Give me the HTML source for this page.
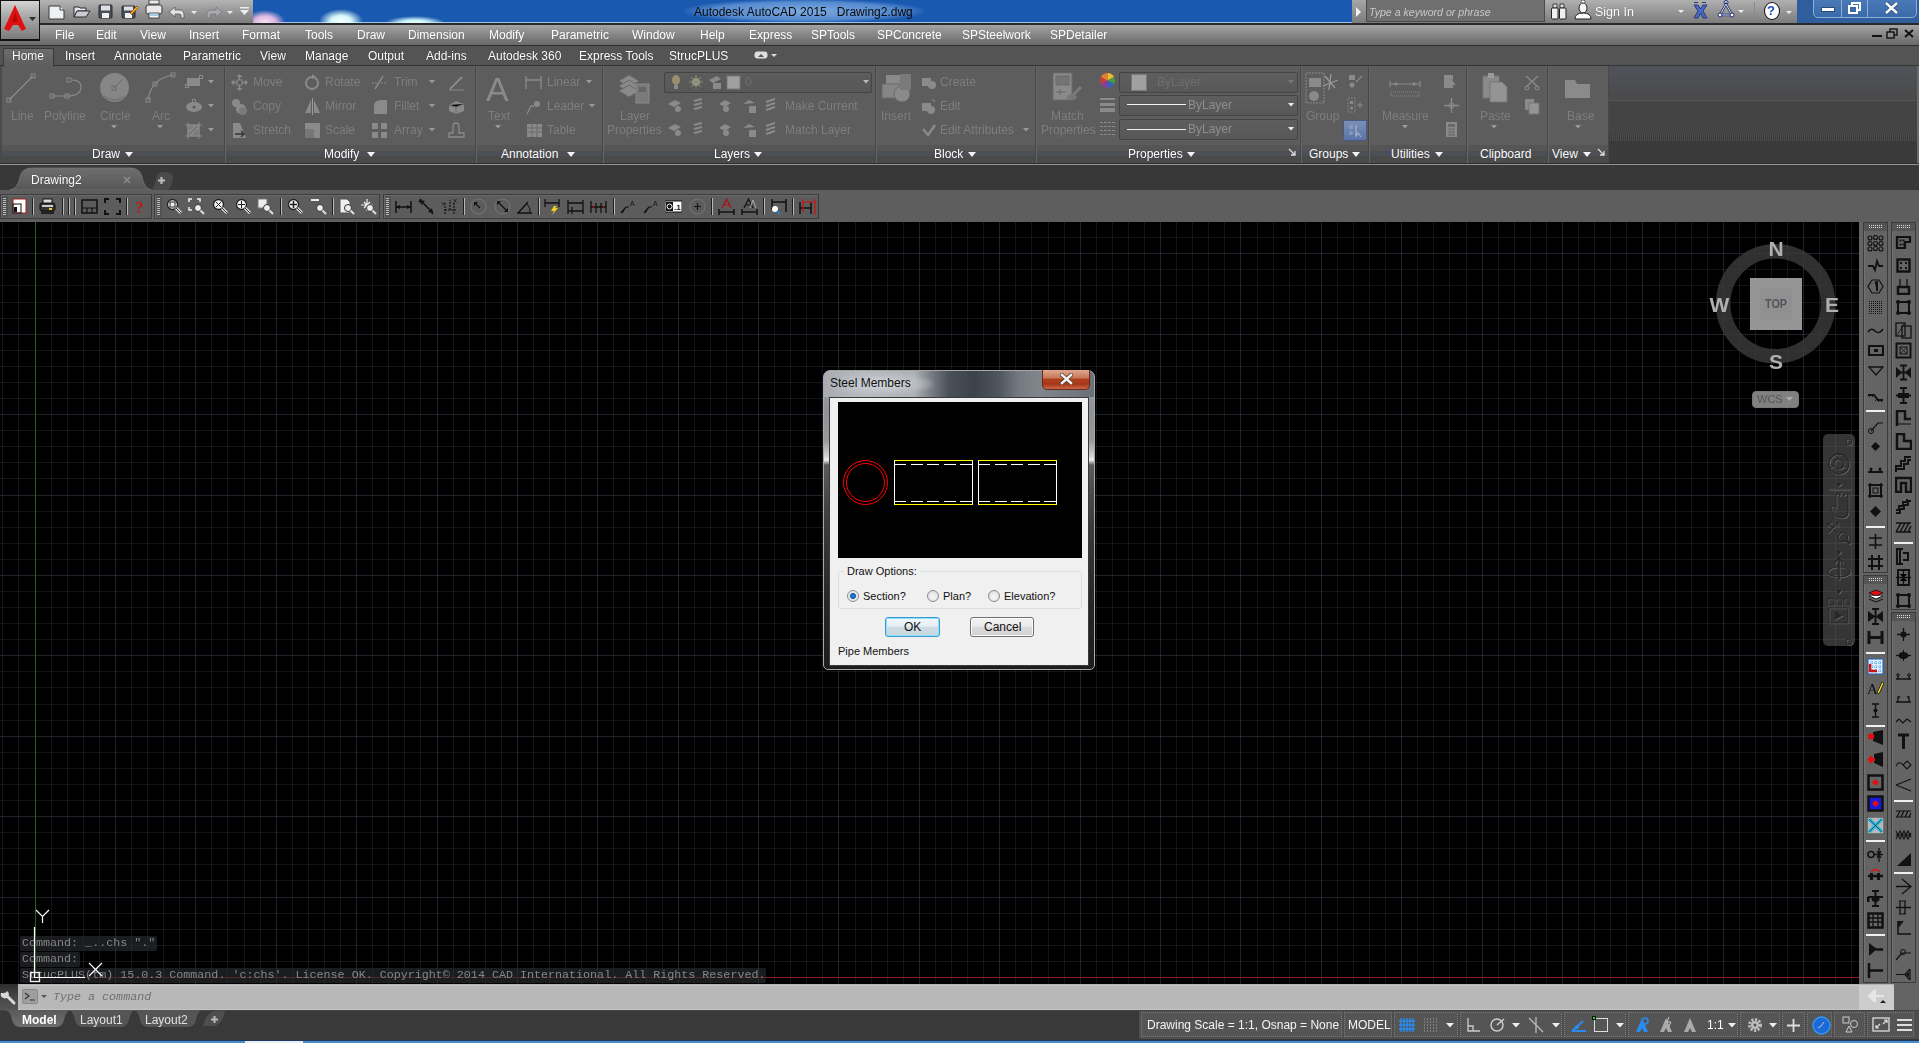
<!DOCTYPE html>
<html><head><meta charset="utf-8">
<style>
*{box-sizing:border-box}
html,body{margin:0;padding:0}
body{width:1919px;height:1043px;overflow:hidden;position:relative;background:#000;font-family:"Liberation Sans",sans-serif;font-size:12px;color:#fff}
.a{position:absolute}
.t{position:absolute;white-space:nowrap;line-height:1}
/* title bar */
#qat{left:39px;top:0;width:214px;height:24px;background:linear-gradient(#b4b4b4,#8e8e8e 60%,#7c7c7c)}
#blue{left:253px;top:0;width:1099px;height:23px;background:linear-gradient(#1a59b0 0,#1a59b0 22px,#9cc4ee 22px)}
#srch{left:1352px;top:0;width:193px;height:24px;background:linear-gradient(#a6a6a6,#7a7a7a)}
#srchbox{left:1366px;top:0;width:179px;height:22px;background:#6f6f6f;border:1px solid #4a4a4a;border-top:none}
#sign{left:1545px;top:0;width:252px;height:24px;background:linear-gradient(#b0b0b0,#8a8a8a 70%,#7a7a7a)}
#winbtn{left:1797px;top:0;width:122px;height:23px;background:#2f5e9e}
#tline{left:0;top:23px;width:1919px;height:2px;background:#2a2a2a}
#menubar{left:0;top:25px;width:1919px;height:21px;background:linear-gradient(#a4a4a4,#8a8a8a 40%,#666 100%)}
#mline{left:0;top:45px;width:1919px;height:1px;background:#2e2e2e}
#ribtabs{left:0;top:46px;width:1919px;height:20px;background:#545454;border-bottom:1px solid #333}
#ribbon{left:0;top:66px;width:1919px;height:98px;background:#444}
#rline{left:0;top:164px;width:1919px;height:1px;background:#959595}
#ftabs{left:0;top:165px;width:1919px;height:25px;background:#383838}
#tbrow{left:0;top:190px;width:1919px;height:32px;background:#5e5e5e}
#canvas{left:0;top:222px;width:1859px;height:762px;background:#000;overflow:hidden}
#rtb{left:1859px;top:222px;width:60px;height:762px;background:#646464}
#cmd{left:0;top:984px;width:1919px;height:26px;background:#b5b5b5}
#status{left:0;top:1010px;width:1919px;height:30px;background:#393939;border-top:1px solid #454545}
#task{left:0;top:1040px;width:1919px;height:3px;background:#2e6bb0}
</style></head><body>
<div class="a" id="canvas"><svg width="1859" height="762" style="position:absolute;left:0;top:0" shape-rendering="crispEdges"><rect x="0" y="15" width="1859" height="1" fill="#121419"/><rect x="0" y="31" width="1859" height="1" fill="#1f222a"/><rect x="0" y="47" width="1859" height="1" fill="#121419"/><rect x="0" y="63" width="1859" height="1" fill="#121419"/><rect x="0" y="80" width="1859" height="1" fill="#121419"/><rect x="0" y="96" width="1859" height="1" fill="#121419"/><rect x="0" y="112" width="1859" height="1" fill="#1f222a"/><rect x="0" y="128" width="1859" height="1" fill="#121419"/><rect x="0" y="144" width="1859" height="1" fill="#121419"/><rect x="0" y="160" width="1859" height="1" fill="#121419"/><rect x="0" y="176" width="1859" height="1" fill="#121419"/><rect x="0" y="192" width="1859" height="1" fill="#1f222a"/><rect x="0" y="208" width="1859" height="1" fill="#121419"/><rect x="0" y="224" width="1859" height="1" fill="#121419"/><rect x="0" y="240" width="1859" height="1" fill="#121419"/><rect x="0" y="256" width="1859" height="1" fill="#121419"/><rect x="0" y="273" width="1859" height="1" fill="#1f222a"/><rect x="0" y="289" width="1859" height="1" fill="#121419"/><rect x="0" y="305" width="1859" height="1" fill="#121419"/><rect x="0" y="321" width="1859" height="1" fill="#121419"/><rect x="0" y="337" width="1859" height="1" fill="#121419"/><rect x="0" y="353" width="1859" height="1" fill="#1f222a"/><rect x="0" y="369" width="1859" height="1" fill="#121419"/><rect x="0" y="385" width="1859" height="1" fill="#121419"/><rect x="0" y="401" width="1859" height="1" fill="#121419"/><rect x="0" y="417" width="1859" height="1" fill="#121419"/><rect x="0" y="433" width="1859" height="1" fill="#1f222a"/><rect x="0" y="449" width="1859" height="1" fill="#121419"/><rect x="0" y="465" width="1859" height="1" fill="#121419"/><rect x="0" y="482" width="1859" height="1" fill="#121419"/><rect x="0" y="498" width="1859" height="1" fill="#121419"/><rect x="0" y="514" width="1859" height="1" fill="#1f222a"/><rect x="0" y="530" width="1859" height="1" fill="#121419"/><rect x="0" y="546" width="1859" height="1" fill="#121419"/><rect x="0" y="562" width="1859" height="1" fill="#121419"/><rect x="0" y="578" width="1859" height="1" fill="#121419"/><rect x="0" y="594" width="1859" height="1" fill="#1f222a"/><rect x="0" y="610" width="1859" height="1" fill="#121419"/><rect x="0" y="626" width="1859" height="1" fill="#121419"/><rect x="0" y="642" width="1859" height="1" fill="#121419"/><rect x="0" y="658" width="1859" height="1" fill="#121419"/><rect x="0" y="675" width="1859" height="1" fill="#1f222a"/><rect x="0" y="691" width="1859" height="1" fill="#121419"/><rect x="0" y="707" width="1859" height="1" fill="#121419"/><rect x="0" y="723" width="1859" height="1" fill="#121419"/><rect x="0" y="739" width="1859" height="1" fill="#121419"/><g style="mix-blend-mode:screen"><rect x="2" y="0" width="1" height="762" fill="#121419"/><rect x="18" y="0" width="1" height="762" fill="#121419"/><rect x="51" y="0" width="1" height="762" fill="#121419"/><rect x="67" y="0" width="1" height="762" fill="#121419"/><rect x="83" y="0" width="1" height="762" fill="#121419"/><rect x="99" y="0" width="1" height="762" fill="#121419"/><rect x="115" y="0" width="1" height="762" fill="#1f222a"/><rect x="131" y="0" width="1" height="762" fill="#121419"/><rect x="147" y="0" width="1" height="762" fill="#121419"/><rect x="163" y="0" width="1" height="762" fill="#121419"/><rect x="179" y="0" width="1" height="762" fill="#121419"/><rect x="195" y="0" width="1" height="762" fill="#1f222a"/><rect x="211" y="0" width="1" height="762" fill="#121419"/><rect x="227" y="0" width="1" height="762" fill="#121419"/><rect x="244" y="0" width="1" height="762" fill="#121419"/><rect x="260" y="0" width="1" height="762" fill="#121419"/><rect x="276" y="0" width="1" height="762" fill="#1f222a"/><rect x="292" y="0" width="1" height="762" fill="#121419"/><rect x="308" y="0" width="1" height="762" fill="#121419"/><rect x="324" y="0" width="1" height="762" fill="#121419"/><rect x="340" y="0" width="1" height="762" fill="#121419"/><rect x="356" y="0" width="1" height="762" fill="#1f222a"/><rect x="372" y="0" width="1" height="762" fill="#121419"/><rect x="388" y="0" width="1" height="762" fill="#121419"/><rect x="404" y="0" width="1" height="762" fill="#121419"/><rect x="420" y="0" width="1" height="762" fill="#121419"/><rect x="437" y="0" width="1" height="762" fill="#1f222a"/><rect x="453" y="0" width="1" height="762" fill="#121419"/><rect x="469" y="0" width="1" height="762" fill="#121419"/><rect x="485" y="0" width="1" height="762" fill="#121419"/><rect x="501" y="0" width="1" height="762" fill="#121419"/><rect x="517" y="0" width="1" height="762" fill="#1f222a"/><rect x="533" y="0" width="1" height="762" fill="#121419"/><rect x="549" y="0" width="1" height="762" fill="#121419"/><rect x="565" y="0" width="1" height="762" fill="#121419"/><rect x="581" y="0" width="1" height="762" fill="#121419"/><rect x="597" y="0" width="1" height="762" fill="#1f222a"/><rect x="613" y="0" width="1" height="762" fill="#121419"/><rect x="629" y="0" width="1" height="762" fill="#121419"/><rect x="646" y="0" width="1" height="762" fill="#121419"/><rect x="662" y="0" width="1" height="762" fill="#121419"/><rect x="678" y="0" width="1" height="762" fill="#1f222a"/><rect x="694" y="0" width="1" height="762" fill="#121419"/><rect x="710" y="0" width="1" height="762" fill="#121419"/><rect x="726" y="0" width="1" height="762" fill="#121419"/><rect x="742" y="0" width="1" height="762" fill="#121419"/><rect x="758" y="0" width="1" height="762" fill="#1f222a"/><rect x="774" y="0" width="1" height="762" fill="#121419"/><rect x="790" y="0" width="1" height="762" fill="#121419"/><rect x="806" y="0" width="1" height="762" fill="#121419"/><rect x="822" y="0" width="1" height="762" fill="#121419"/><rect x="838" y="0" width="1" height="762" fill="#1f222a"/><rect x="855" y="0" width="1" height="762" fill="#121419"/><rect x="871" y="0" width="1" height="762" fill="#121419"/><rect x="887" y="0" width="1" height="762" fill="#121419"/><rect x="903" y="0" width="1" height="762" fill="#121419"/><rect x="919" y="0" width="1" height="762" fill="#1f222a"/><rect x="935" y="0" width="1" height="762" fill="#121419"/><rect x="951" y="0" width="1" height="762" fill="#121419"/><rect x="967" y="0" width="1" height="762" fill="#121419"/><rect x="983" y="0" width="1" height="762" fill="#121419"/><rect x="999" y="0" width="1" height="762" fill="#1f222a"/><rect x="1015" y="0" width="1" height="762" fill="#121419"/><rect x="1031" y="0" width="1" height="762" fill="#121419"/><rect x="1048" y="0" width="1" height="762" fill="#121419"/><rect x="1064" y="0" width="1" height="762" fill="#121419"/><rect x="1080" y="0" width="1" height="762" fill="#1f222a"/><rect x="1096" y="0" width="1" height="762" fill="#121419"/><rect x="1112" y="0" width="1" height="762" fill="#121419"/><rect x="1128" y="0" width="1" height="762" fill="#121419"/><rect x="1144" y="0" width="1" height="762" fill="#121419"/><rect x="1160" y="0" width="1" height="762" fill="#1f222a"/><rect x="1176" y="0" width="1" height="762" fill="#121419"/><rect x="1192" y="0" width="1" height="762" fill="#121419"/><rect x="1208" y="0" width="1" height="762" fill="#121419"/><rect x="1224" y="0" width="1" height="762" fill="#121419"/><rect x="1240" y="0" width="1" height="762" fill="#1f222a"/><rect x="1257" y="0" width="1" height="762" fill="#121419"/><rect x="1273" y="0" width="1" height="762" fill="#121419"/><rect x="1289" y="0" width="1" height="762" fill="#121419"/><rect x="1305" y="0" width="1" height="762" fill="#121419"/><rect x="1321" y="0" width="1" height="762" fill="#1f222a"/><rect x="1337" y="0" width="1" height="762" fill="#121419"/><rect x="1353" y="0" width="1" height="762" fill="#121419"/><rect x="1369" y="0" width="1" height="762" fill="#121419"/><rect x="1385" y="0" width="1" height="762" fill="#121419"/><rect x="1401" y="0" width="1" height="762" fill="#1f222a"/><rect x="1417" y="0" width="1" height="762" fill="#121419"/><rect x="1433" y="0" width="1" height="762" fill="#121419"/><rect x="1449" y="0" width="1" height="762" fill="#121419"/><rect x="1466" y="0" width="1" height="762" fill="#121419"/><rect x="1482" y="0" width="1" height="762" fill="#1f222a"/><rect x="1498" y="0" width="1" height="762" fill="#121419"/><rect x="1514" y="0" width="1" height="762" fill="#121419"/><rect x="1530" y="0" width="1" height="762" fill="#121419"/><rect x="1546" y="0" width="1" height="762" fill="#121419"/><rect x="1562" y="0" width="1" height="762" fill="#1f222a"/><rect x="1578" y="0" width="1" height="762" fill="#121419"/><rect x="1594" y="0" width="1" height="762" fill="#121419"/><rect x="1610" y="0" width="1" height="762" fill="#121419"/><rect x="1626" y="0" width="1" height="762" fill="#121419"/><rect x="1642" y="0" width="1" height="762" fill="#1f222a"/><rect x="1659" y="0" width="1" height="762" fill="#121419"/><rect x="1675" y="0" width="1" height="762" fill="#121419"/><rect x="1691" y="0" width="1" height="762" fill="#121419"/><rect x="1707" y="0" width="1" height="762" fill="#121419"/><rect x="1723" y="0" width="1" height="762" fill="#1f222a"/><rect x="1739" y="0" width="1" height="762" fill="#121419"/><rect x="1755" y="0" width="1" height="762" fill="#121419"/><rect x="1771" y="0" width="1" height="762" fill="#121419"/><rect x="1787" y="0" width="1" height="762" fill="#121419"/><rect x="1803" y="0" width="1" height="762" fill="#1f222a"/><rect x="1819" y="0" width="1" height="762" fill="#121419"/><rect x="1835" y="0" width="1" height="762" fill="#121419"/><rect x="1851" y="0" width="1" height="762" fill="#121419"/></g><rect x="35" y="0" width="1" height="755" fill="#1c661c"/><rect x="35" y="755" width="1824" height="1" fill="#8a1e1e"/></svg></div>
<div class="a" id="qat"></div>
<div class="a" id="blue"></div>
<div class="a" id="srch"></div>
<div class="a" id="srchbox"></div>
<div class="a" id="sign"></div>
<div class="a" id="winbtn"></div>
<div class="a" id="tline"></div>
<div class="a" id="menubar"></div>
<div class="a" id="mline"></div>
<div class="a" id="ribtabs"></div>
<div class="a" id="ribbon"></div>
<div class="a" id="rline"></div>
<div class="a" id="ftabs"></div>
<div class="a" id="tbrow"></div>
<div class="a" id="rtb"></div>
<div class="a" id="cmd"></div>
<div class="a" id="status"></div>
<div class="a" id="task"></div>

<!-- app button -->
<div class="a" style="left:0;top:0;width:40px;height:41px;background:#111;"></div>
<div class="a" style="left:1px;top:1px;width:38px;height:38px;background:linear-gradient(#d4d4d4,#a8a8a8 40%,#8c8c8c 80%,#7a7a7a)"></div>
<svg class="a" style="left:3px;top:5px" width="24" height="26"><path d="M12 0 L23 24 L19 26 L15 20 L10 20 L6 26 L1 24 Z" fill="#e01010"/><path d="M12 7 L15 17 L9 17 Z" fill="#b00c0c"/></svg>
<svg class="a" style="left:29px;top:17px" width="8" height="5"><path d="M0 0H7L3.5 4Z" fill="#2a2e36"/></svg>
<!-- QAT icons -->
<svg class="a" style="left:48px;top:5px" width="18" height="15"><path d="M1 1H12L16 5V14H1Z" fill="#eef0f2" stroke="#3a3a3a"/><path d="M12 1V5H16" fill="#fff" stroke="#3a3a3a"/></svg>
<svg class="a" style="left:73px;top:5px" width="18" height="13"><path d="M1 2H6L7 3H13V6H4L1 12Z" fill="#e4e6ea" stroke="#2a2a2a"/><path d="M4 6H17L13 12H1Z" fill="#c8ccd2" stroke="#2a2a2a"/></svg>
<svg class="a" style="left:98px;top:4px" width="16" height="15"><rect x="1" y="1" width="13" height="13" rx="1" fill="#4a5058" stroke="#2a2a2a"/><rect x="3" y="1.5" width="9" height="5" fill="#dde0e4"/><rect x="4" y="9" width="7" height="5" fill="#f0f0f0"/></svg>
<svg class="a" style="left:121px;top:4px" width="18" height="15"><rect x="1" y="2" width="13" height="12" rx="1" fill="#4a5058" stroke="#2a2a2a"/><rect x="3" y="2.5" width="9" height="4" fill="#dde0e4"/><rect x="4" y="9" width="7" height="5" fill="#f0f0f0"/><path d="M9 9L16 2L17.5 3.5L10.5 10.5Z" fill="#f0b020" stroke="#a04010" stroke-width=".8"/></svg>
<svg class="a" style="left:145px;top:0px" width="18" height="19"><rect x="4" y="0" width="10" height="4" fill="#e8e8e8" stroke="#333" stroke-width=".8"/><rect x="1" y="5" width="16" height="9" rx="2" fill="#eaeaea" stroke="#333"/><rect x="4" y="13" width="10" height="5" fill="#f4f4f4" stroke="#333" stroke-width=".8"/><rect x="5" y="14" width="8" height="2" fill="#9ad0ee"/></svg>
<svg class="a" style="left:168px;top:6px" width="18" height="13"><path d="M1 6L7 1V4H12Q16 4 16 9V12H13V9Q13 8 11 8H7V11Z" fill="#e0e2e6" stroke="#555" stroke-width=".8"/></svg>
<svg class="a" style="left:191px;top:11px" width="7" height="4"><path d="M0 0H6L3 3Z" fill="#eee"/></svg>
<svg class="a" style="left:205px;top:6px" width="18" height="13"><path d="M17 6L11 1V4H6Q2 4 2 9V12H5V9Q5 8 7 8H11V11Z" fill="#a8aaae" stroke="#777" stroke-width=".8"/></svg>
<svg class="a" style="left:227px;top:11px" width="7" height="4"><path d="M0 0H6L3 3Z" fill="#eee"/></svg>
<svg class="a" style="left:240px;top:7px" width="10" height="10"><rect x="0" y="0" width="9" height="1.5" fill="#eee"/><path d="M0 3H9L4.5 8Z" fill="#eee"/></svg>
<!-- blue title blobs -->
<div class="a" style="left:253px;top:8px;width:34px;height:15px;background:radial-gradient(ellipse 20px 12px at 12px 14px,#f4e4f4 0,#e0b8e0 50%,rgba(26,89,176,0) 100%)"></div>
<div class="a" style="left:315px;top:6px;width:52px;height:17px;background:radial-gradient(ellipse 22px 12px at 26px 15px,#f4ffff 0,#d8f8f8 45%,rgba(26,89,176,0) 100%)"></div>
<div class="a" style="left:385px;top:14px;width:60px;height:9px;background:radial-gradient(ellipse 30px 7px at 30px 9px,#f0ffff 0,#c8f0f8 45%,rgba(26,89,176,0) 100%)"></div>
<div class="a" style="left:684px;top:0px;width:240px;height:22px;border-radius:11px;background:radial-gradient(ellipse 124px 12px at 50% 50%,rgba(130,175,228,.95),rgba(100,150,215,.8) 75%,rgba(26,89,176,0))"></div>
<div class="t" style="left:694px;top:6px;font-size:12px;color:#0a0a0a">Autodesk AutoCAD 2015&nbsp;&nbsp;&nbsp;Drawing2.dwg</div>
<!-- search -->
<svg class="a" style="left:1356px;top:7px" width="6" height="10"><path d="M0 0L5 5L0 10Z" fill="#f0f0f0"/></svg>
<div class="t" style="left:1369px;top:7px;font-size:10.6px;font-style:italic;color:#c8c8c8">Type a keyword or phrase</div>
<svg class="a" style="left:1550px;top:2px" width="18" height="18"><path d="M3 2H7V6H3Z M10 2H14V6H10Z" fill="#ddd" stroke="#222" stroke-width=".8"/><rect x="1.5" y="6" width="6.5" height="11" rx="1" fill="#f0f0f0" stroke="#222"/><rect x="9.5" y="6" width="6.5" height="11" rx="1" fill="#f0f0f0" stroke="#222"/></svg>
<svg class="a" style="left:1574px;top:0px" width="18" height="20"><circle cx="9" cy="2" r="2" fill="#fff" stroke="#222" stroke-width=".6"/><ellipse cx="9" cy="8" rx="4" ry="5" fill="#f4f4f4" stroke="#222"/><path d="M1 19Q1 13 9 13Q17 13 17 19Z" fill="#fafafa" stroke="#222"/></svg>
<div class="t" style="left:1595px;top:6px;font-size:12.5px;color:#fff;text-shadow:0 0 1px #555">Sign In</div>
<svg class="a" style="left:1678px;top:10px" width="7" height="4"><path d="M0 0H6L3 3Z" fill="#eee"/></svg>
<svg class="a" style="left:1693px;top:1px" width="16" height="18"><rect x="1" y="1" width="4" height="1" fill="#2a3a8a"/><rect x="9" y="1" width="4" height="1" fill="#2a3a8a"/><path d="M1 4H5L7.5 8L10 4H14L10 10L14 17H10L7.5 12L5 17H1L5 10Z" fill="#4a6ac8" stroke="#1a2a6a" stroke-width=".8"/></svg>
<svg class="a" style="left:1717px;top:0px" width="18" height="19"><circle cx="9" cy="2.5" r="2" fill="#fff" stroke="#1a2a6a"/><path d="M9 4L3 15H15Z" fill="none" stroke="#1a2a6a" stroke-width="2.4"/><path d="M9 4L3 15H15Z" fill="none" stroke="#d8e0f0" stroke-width="1"/><circle cx="3" cy="15" r="2" fill="#fff" stroke="#1a2a6a"/><circle cx="15" cy="15" r="2" fill="#fff" stroke="#1a2a6a"/></svg>
<svg class="a" style="left:1738px;top:10px" width="7" height="4"><path d="M0 0H6L3 3Z" fill="#eee"/></svg>
<div class="a" style="left:1754px;top:2px;width:1px;height:19px;background:#8a8a8a"></div>
<div class="a" style="left:1764px;top:2px;width:16px;height:18px;border-radius:50%;background:#fff;border:1.5px solid #111"></div>
<div class="t" style="left:1767px;top:4px;font-size:13px;font-weight:bold;color:#1a4ab8">?</div>
<svg class="a" style="left:1786px;top:11px" width="7" height="4"><path d="M0 0H6L3 3Z" fill="#eee"/></svg>
<!-- window buttons -->
<div class="a" style="left:1813px;top:-2px;width:104px;height:20px;border:1px solid #8ab0d8;border-radius:0 0 5px 5px;background:linear-gradient(#4a7ab8,#3a6aa8)"></div>
<div class="a" style="left:1841px;top:0px;width:1px;height:17px;background:#8ab0d8"></div>
<div class="a" style="left:1867px;top:0px;width:1px;height:17px;background:#8ab0d8"></div>
<div class="a" style="left:1822px;top:8px;width:12px;height:3px;background:#fff;box-shadow:0 0 0 1px #2a4a7a"></div>
<svg class="a" style="left:1848px;top:2px" width="13" height="13"><rect x="4" y="1" width="8" height="7" fill="none" stroke="#fff" stroke-width="2"/><rect x="1" y="4" width="8" height="7" fill="#3a6aa8" stroke="#fff" stroke-width="2"/></svg>
<svg class="a" style="left:1885px;top:2px" width="13" height="12"><path d="M1 1L12 11M12 1L1 11" stroke="#2a4a7a" stroke-width="4"/><path d="M1 1L12 11M12 1L1 11" stroke="#fff" stroke-width="2.4"/></svg>
<!-- menubar -->
<div class="t" style="left:55px;top:29px;font-size:12px;color:#fff;text-shadow:0 0 1px #777">File</div>
<div class="t" style="left:96px;top:29px;font-size:12px;color:#fff;text-shadow:0 0 1px #777">Edit</div>
<div class="t" style="left:140px;top:29px;font-size:12px;color:#fff;text-shadow:0 0 1px #777">View</div>
<div class="t" style="left:189px;top:29px;font-size:12px;color:#fff;text-shadow:0 0 1px #777">Insert</div>
<div class="t" style="left:242px;top:29px;font-size:12px;color:#fff;text-shadow:0 0 1px #777">Format</div>
<div class="t" style="left:305px;top:29px;font-size:12px;color:#fff;text-shadow:0 0 1px #777">Tools</div>
<div class="t" style="left:357px;top:29px;font-size:12px;color:#fff;text-shadow:0 0 1px #777">Draw</div>
<div class="t" style="left:408px;top:29px;font-size:12px;color:#fff;text-shadow:0 0 1px #777">Dimension</div>
<div class="t" style="left:489px;top:29px;font-size:12px;color:#fff;text-shadow:0 0 1px #777">Modify</div>
<div class="t" style="left:551px;top:29px;font-size:12px;color:#fff;text-shadow:0 0 1px #777">Parametric</div>
<div class="t" style="left:632px;top:29px;font-size:12px;color:#fff;text-shadow:0 0 1px #777">Window</div>
<div class="t" style="left:700px;top:29px;font-size:12px;color:#fff;text-shadow:0 0 1px #777">Help</div>
<div class="t" style="left:749px;top:29px;font-size:12px;color:#fff;text-shadow:0 0 1px #777">Express</div>
<div class="t" style="left:811px;top:29px;font-size:12px;color:#fff;text-shadow:0 0 1px #777">SPTools</div>
<div class="t" style="left:877px;top:29px;font-size:12px;color:#fff;text-shadow:0 0 1px #777">SPConcrete</div>
<div class="t" style="left:962px;top:29px;font-size:12px;color:#fff;text-shadow:0 0 1px #777">SPSteelwork</div>
<div class="t" style="left:1050px;top:29px;font-size:12px;color:#fff;text-shadow:0 0 1px #777">SPDetailer</div>
<div class="a" style="left:1872px;top:35px;width:10px;height:2px;background:#111"></div>
<svg class="a" style="left:1886px;top:28px" width="12" height="11"><rect x="4" y="1" width="7" height="6" fill="none" stroke="#111" stroke-width="1.4"/><rect x="1" y="4" width="7" height="6" fill="#8a8a8a" stroke="#111" stroke-width="1.4"/></svg>
<svg class="a" style="left:1904px;top:29px" width="10" height="9"><path d="M1 1L9 8M9 1L1 8" stroke="#111" stroke-width="2"/></svg>

<div class="a" style="left:0;top:66px;width:1608px;height:97px;background:#5d5d5d"></div>
<div class="a" style="left:1608px;top:66px;width:310px;height:34px;background:linear-gradient(#50535a,#4a4a4a)"></div>
<div class="a" style="left:1608px;top:100px;width:310px;height:1px;background:#555"></div>
<div class="a" style="left:1608px;top:101px;width:310px;height:32px;background:#444"></div>
<div class="a" style="left:1608px;top:133px;width:310px;height:8px;background:repeating-linear-gradient(90deg,#4a4a4a 0 1px,#3c3c3c 1px 2px)"></div>
<div class="a" style="left:1608px;top:141px;width:310px;height:22px;background:#3a3a3a"></div>
<div class="a" style="left:1917px;top:66px;width:2px;height:98px;background:#6a6a6a"></div>
<div class="a" style="left:0;top:163px;width:1919px;height:1px;background:#2e2e2e"></div>
<div class="a" style="left:0px;top:145px;width:224px;height:18px;background:linear-gradient(#555 0,#555 6px,#4c4f55 6px,#4c4f55 11px,#4a4a4a 11px)"></div>
<div class="t" style="left:92px;top:148px;font-size:12px;color:#fff;text-shadow:0 0 1px #333">Draw</div>
<div class="a" style="left:224px;top:145px;width:251px;height:18px;background:linear-gradient(#555 0,#555 6px,#4c4f55 6px,#4c4f55 11px,#4a4a4a 11px)"></div>
<div class="a" style="left:224px;top:66px;width:1px;height:97px;background:#484848"></div>
<div class="a" style="left:225px;top:66px;width:1px;height:97px;background:#646464"></div>
<div class="t" style="left:324px;top:148px;font-size:12px;color:#fff;text-shadow:0 0 1px #333">Modify</div>
<div class="a" style="left:475px;top:145px;width:127px;height:18px;background:linear-gradient(#555 0,#555 6px,#4c4f55 6px,#4c4f55 11px,#4a4a4a 11px)"></div>
<div class="a" style="left:475px;top:66px;width:1px;height:97px;background:#484848"></div>
<div class="a" style="left:476px;top:66px;width:1px;height:97px;background:#646464"></div>
<div class="t" style="left:501px;top:148px;font-size:12px;color:#fff;text-shadow:0 0 1px #333">Annotation</div>
<div class="a" style="left:602px;top:145px;width:273px;height:18px;background:linear-gradient(#555 0,#555 6px,#4c4f55 6px,#4c4f55 11px,#4a4a4a 11px)"></div>
<div class="a" style="left:602px;top:66px;width:1px;height:97px;background:#484848"></div>
<div class="a" style="left:603px;top:66px;width:1px;height:97px;background:#646464"></div>
<div class="t" style="left:714px;top:148px;font-size:12px;color:#fff;text-shadow:0 0 1px #333">Layers</div>
<div class="a" style="left:875px;top:145px;width:160px;height:18px;background:linear-gradient(#555 0,#555 6px,#4c4f55 6px,#4c4f55 11px,#4a4a4a 11px)"></div>
<div class="a" style="left:875px;top:66px;width:1px;height:97px;background:#484848"></div>
<div class="a" style="left:876px;top:66px;width:1px;height:97px;background:#646464"></div>
<div class="t" style="left:934px;top:148px;font-size:12px;color:#fff;text-shadow:0 0 1px #333">Block</div>
<div class="a" style="left:1035px;top:145px;width:265px;height:18px;background:linear-gradient(#555 0,#555 6px,#4c4f55 6px,#4c4f55 11px,#4a4a4a 11px)"></div>
<div class="a" style="left:1035px;top:66px;width:1px;height:97px;background:#484848"></div>
<div class="a" style="left:1036px;top:66px;width:1px;height:97px;background:#646464"></div>
<div class="t" style="left:1128px;top:148px;font-size:12px;color:#fff;text-shadow:0 0 1px #333">Properties</div>
<div class="a" style="left:1300px;top:145px;width:68px;height:18px;background:linear-gradient(#555 0,#555 6px,#4c4f55 6px,#4c4f55 11px,#4a4a4a 11px)"></div>
<div class="a" style="left:1300px;top:66px;width:1px;height:97px;background:#484848"></div>
<div class="a" style="left:1301px;top:66px;width:1px;height:97px;background:#646464"></div>
<div class="t" style="left:1309px;top:148px;font-size:12px;color:#fff;text-shadow:0 0 1px #333">Groups</div>
<div class="a" style="left:1368px;top:145px;width:98px;height:18px;background:linear-gradient(#555 0,#555 6px,#4c4f55 6px,#4c4f55 11px,#4a4a4a 11px)"></div>
<div class="a" style="left:1368px;top:66px;width:1px;height:97px;background:#484848"></div>
<div class="a" style="left:1369px;top:66px;width:1px;height:97px;background:#646464"></div>
<div class="t" style="left:1391px;top:148px;font-size:12px;color:#fff;text-shadow:0 0 1px #333">Utilities</div>
<div class="a" style="left:1466px;top:145px;width:81px;height:18px;background:linear-gradient(#555 0,#555 6px,#4c4f55 6px,#4c4f55 11px,#4a4a4a 11px)"></div>
<div class="a" style="left:1466px;top:66px;width:1px;height:97px;background:#484848"></div>
<div class="a" style="left:1467px;top:66px;width:1px;height:97px;background:#646464"></div>
<div class="t" style="left:1480px;top:148px;font-size:12px;color:#fff;text-shadow:0 0 1px #333">Clipboard</div>
<div class="a" style="left:1547px;top:145px;width:61px;height:18px;background:linear-gradient(#555 0,#555 6px,#4c4f55 6px,#4c4f55 11px,#4a4a4a 11px)"></div>
<div class="a" style="left:1547px;top:66px;width:1px;height:97px;background:#484848"></div>
<div class="a" style="left:1548px;top:66px;width:1px;height:97px;background:#646464"></div>
<div class="t" style="left:1552px;top:148px;font-size:12px;color:#fff;text-shadow:0 0 1px #333">View</div>
<div class="a" style="left:1608px;top:66px;width:1px;height:97px;background:#484848"></div>
<div class="a" style="left:0;top:66px;width:2px;height:97px;background:#4a4a4a"></div>
<svg class="a" style="left:125px;top:152px" width="9" height="6"><path d="M0 0H8L4 5Z" fill="#f4f4f4"/></svg>
<svg class="a" style="left:367px;top:152px" width="9" height="6"><path d="M0 0H8L4 5Z" fill="#f4f4f4"/></svg>
<svg class="a" style="left:567px;top:152px" width="9" height="6"><path d="M0 0H8L4 5Z" fill="#f4f4f4"/></svg>
<svg class="a" style="left:754px;top:152px" width="9" height="6"><path d="M0 0H8L4 5Z" fill="#f4f4f4"/></svg>
<svg class="a" style="left:968px;top:152px" width="9" height="6"><path d="M0 0H8L4 5Z" fill="#f4f4f4"/></svg>
<svg class="a" style="left:1187px;top:152px" width="9" height="6"><path d="M0 0H8L4 5Z" fill="#f4f4f4"/></svg>
<svg class="a" style="left:1352px;top:152px" width="9" height="6"><path d="M0 0H8L4 5Z" fill="#f4f4f4"/></svg>
<svg class="a" style="left:1435px;top:152px" width="9" height="6"><path d="M0 0H8L4 5Z" fill="#f4f4f4"/></svg>
<svg class="a" style="left:1583px;top:152px" width="9" height="6"><path d="M0 0H8L4 5Z" fill="#f4f4f4"/></svg>
<svg class="a" style="left:1288px;top:148px" width="9" height="9"><path d="M1 1L7 7M7 3V7H3" stroke="#ddd" fill="none" stroke-width="1.3"/></svg>
<svg class="a" style="left:1597px;top:148px" width="9" height="9"><path d="M1 1L7 7M7 3V7H3" stroke="#ddd" fill="none" stroke-width="1.3"/></svg>
<div class="a" style="left:3px;top:48px;width:51px;height:19px;border:1px solid #3a3a3a;border-bottom:none;border-radius:2px 2px 0 0;background:linear-gradient(#6c6c6c,#5c5c5c)"></div>
<div class="t" style="left:12px;top:50px;font-size:12px;color:#fff;text-shadow:0 0 1px #222">Home</div>
<div class="t" style="left:65px;top:50px;font-size:12px;color:#fff;text-shadow:0 0 1px #222">Insert</div>
<div class="t" style="left:114px;top:50px;font-size:12px;color:#fff;text-shadow:0 0 1px #222">Annotate</div>
<div class="t" style="left:183px;top:50px;font-size:12px;color:#fff;text-shadow:0 0 1px #222">Parametric</div>
<div class="t" style="left:260px;top:50px;font-size:12px;color:#fff;text-shadow:0 0 1px #222">View</div>
<div class="t" style="left:305px;top:50px;font-size:12px;color:#fff;text-shadow:0 0 1px #222">Manage</div>
<div class="t" style="left:368px;top:50px;font-size:12px;color:#fff;text-shadow:0 0 1px #222">Output</div>
<div class="t" style="left:426px;top:50px;font-size:12px;color:#fff;text-shadow:0 0 1px #222">Add-ins</div>
<div class="t" style="left:488px;top:50px;font-size:12px;color:#fff;text-shadow:0 0 1px #222">Autodesk 360</div>
<div class="t" style="left:579px;top:50px;font-size:12px;color:#fff;text-shadow:0 0 1px #222">Express Tools</div>
<div class="t" style="left:669px;top:50px;font-size:12px;color:#fff;text-shadow:0 0 1px #222">StrucPLUS</div>
<svg class="a" style="left:754px;top:51px" width="24" height="9"><rect x="0.5" y="0.5" width="13" height="7" rx="3" fill="#ddd"/><path d="M4 6L7 3L10 6Z" fill="#555"/><path d="M17 3H23L20 6Z" fill="#ddd"/></svg>
<svg class="a" style="left:6px;top:73px" width="30" height="30"><path d="M3 27L27 3" stroke="#8a8a8a" stroke-width="1.2"/><rect x="1" y="25" width="4" height="4" fill="none" stroke="#8a8a8a"/><rect x="25" y="1" width="4" height="4" fill="none" stroke="#8a8a8a"/></svg>
<div class="t" style="left:11px;top:110px;font-size:12px;color:#7e7e7e;">Line</div>
<svg class="a" style="left:49px;top:76px" width="34" height="24"><path d="M3 20H18M32 11Q32 4 23 4" stroke="#8a8a8a" stroke-width="1.2" fill="none"/><path d="M18 20Q32 20 32 11" stroke="#8a8a8a" stroke-width="1.2" fill="none"/><rect x="1" y="18" width="4" height="4" fill="none" stroke="#8a8a8a"/><rect x="16" y="18" width="4" height="4" fill="none" stroke="#8a8a8a"/><rect x="18" y="2" width="4" height="4" fill="none" stroke="#8a8a8a"/></svg>
<div class="t" style="left:44px;top:110px;font-size:12px;color:#7e7e7e;">Polyline</div>
<svg class="a" style="left:99px;top:72px" width="32" height="32"><circle cx="15.5" cy="15.5" r="14.5" fill="#868686"/><path d="M15 16L24 7" stroke="#6a6a6a"/><rect x="13" y="14" width="4" height="4" fill="none" stroke="#6a6a6a"/><path d="M5 24Q15 32 26 24" stroke="#777" stroke-width="2" fill="none"/></svg>
<div class="t" style="left:100px;top:110px;font-size:12px;color:#7e7e7e;">Circle</div>
<svg class="a" style="left:111px;top:125px" width="7" height="5"><path d="M0 0H6L3 3.5Z" fill="#9a9a9a"/></svg>
<svg class="a" style="left:145px;top:72px" width="32" height="32"><path d="M3 28Q6 6 29 3" stroke="#8a8a8a" stroke-width="1.2" fill="none"/><rect x="1" y="26" width="4" height="4" fill="none" stroke="#8a8a8a"/><rect x="8" y="10" width="4" height="4" fill="none" stroke="#8a8a8a"/><rect x="26" y="1" width="4" height="4" fill="none" stroke="#8a8a8a"/></svg>
<div class="t" style="left:152px;top:110px;font-size:12px;color:#7e7e7e;">Arc</div>
<svg class="a" style="left:157px;top:125px" width="7" height="5"><path d="M0 0H6L3 3.5Z" fill="#9a9a9a"/></svg>
<svg class="a" style="left:185px;top:75px" width="19" height="14"><rect x="2" y="3" width="13" height="8" fill="#8a8a8a"/><rect x="0.5" y="9.5" width="3" height="3" fill="none" stroke="#8a8a8a"/><rect x="14.5" y="0.5" width="3" height="3" fill="none" stroke="#8a8a8a"/></svg>
<svg class="a" style="left:208px;top:80px" width="7" height="5"><path d="M0 0H6L3 3.5Z" fill="#9a9a9a"/></svg>
<svg class="a" style="left:185px;top:99px" width="19" height="14"><ellipse cx="9" cy="8" rx="8" ry="5" fill="#8a8a8a"/><circle cx="9" cy="8" r="1.5" fill="#5a5a5a"/><rect x="7.5" y="0.5" width="3" height="3" fill="none" stroke="#8a8a8a"/></svg>
<svg class="a" style="left:208px;top:104px" width="7" height="5"><path d="M0 0H6L3 3.5Z" fill="#9a9a9a"/></svg>
<svg class="a" style="left:185px;top:122px" width="18" height="17"><rect x="3" y="3" width="11" height="11" fill="#7a7a7a" stroke="#8a8a8a"/><path d="M0 3H17M0 14H17M3 0V17M14 0V17" stroke="#8a8a8a"/><path d="M4 10L10 4M6 13L13 6" stroke="#999"/></svg>
<svg class="a" style="left:208px;top:128px" width="7" height="5"><path d="M0 0H6L3 3.5Z" fill="#9a9a9a"/></svg>
<svg class="a" style="left:231px;top:74px" width="17" height="17"><path d="M8.5 1V16M1 8.5H16" stroke="#8a8a8a" stroke-width="1.5"/><path d="M8.5 0L5.5 3H11.5Z M8.5 17L5.5 14H11.5Z M0 8.5L3 5.5V11.5Z M17 8.5L14 5.5V11.5Z" fill="#8a8a8a"/><rect x="6" y="6" width="5" height="5" fill="#5a5a5a" stroke="#8a8a8a"/></svg>
<div class="t" style="left:253px;top:76px;font-size:12px;color:#7e7e7e;">Move</div>
<svg class="a" style="left:304px;top:74px" width="17" height="17"><circle cx="8" cy="9" r="6" fill="none" stroke="#8a8a8a" stroke-width="2"/><path d="M8 0L12 3L8 5Z" fill="#8a8a8a"/></svg>
<div class="t" style="left:325px;top:76px;font-size:12px;color:#7e7e7e;">Rotate</div>
<svg class="a" style="left:371px;top:74px" width="17" height="17"><path d="M1 9H7M10 9H16" stroke="#8a8a8a" stroke-width="1.2" stroke-dasharray="2 1"/><path d="M4 15L12 2" stroke="#8a8a8a" stroke-width="1.5"/></svg>
<div class="t" style="left:394px;top:76px;font-size:12px;color:#7e7e7e;">Trim</div>
<svg class="a" style="left:429px;top:80px" width="7" height="5"><path d="M0 0H6L3 3.5Z" fill="#9a9a9a"/></svg>
<svg class="a" style="left:448px;top:74px" width="17" height="17"><path d="M2 15L14 3" stroke="#8a8a8a" stroke-width="2"/><path d="M1 16H16" stroke="#8a8a8a"/></svg>
<svg class="a" style="left:231px;top:98px" width="17" height="17"><circle cx="5" cy="5" r="4" fill="#8a8a8a"/><circle cx="10" cy="11" r="5" fill="#8a8a8a"/><circle cx="12" cy="13" r="4" fill="#7a7a7a"/></svg>
<div class="t" style="left:253px;top:100px;font-size:12px;color:#7e7e7e;">Copy</div>
<svg class="a" style="left:304px;top:98px" width="17" height="17"><path d="M7 2L1 15H7Z M10 2L16 15H10Z" fill="#8a8a8a"/><path d="M8.5 0V17" stroke="#9a9a9a"/></svg>
<div class="t" style="left:325px;top:100px;font-size:12px;color:#7e7e7e;">Mirror</div>
<svg class="a" style="left:371px;top:98px" width="17" height="17"><path d="M3 16V8Q3 2 10 2H16V16Z" fill="#8a8a8a"/></svg>
<div class="t" style="left:394px;top:100px;font-size:12px;color:#7e7e7e;">Fillet</div>
<svg class="a" style="left:429px;top:104px" width="7" height="5"><path d="M0 0H6L3 3.5Z" fill="#9a9a9a"/></svg>
<svg class="a" style="left:448px;top:98px" width="17" height="17"><path d="M1 7L8 3L16 6V13L8 16L1 13Z" fill="#8a8a8a"/><path d="M8 9V16M1 7L8 9L16 6" stroke="#6a6a6a"/></svg>
<svg class="a" style="left:231px;top:122px" width="17" height="17"><path d="M2 1H9L15 16H2Z" fill="#8a8a8a"/><path d="M4 12H13M10 9L13 12L10 15" stroke="#333" stroke-width="1.3" fill="none"/></svg>
<div class="t" style="left:253px;top:124px;font-size:12px;color:#7e7e7e;">Stretch</div>
<svg class="a" style="left:304px;top:122px" width="17" height="17"><rect x="1" y="1" width="15" height="15" fill="#8a8a8a"/><rect x="1" y="7" width="9" height="9" fill="#777"/></svg>
<div class="t" style="left:325px;top:124px;font-size:12px;color:#7e7e7e;">Scale</div>
<svg class="a" style="left:371px;top:122px" width="17" height="17"><rect x="1" y="1" width="6" height="6" fill="#8a8a8a"/><rect x="10" y="1" width="6" height="6" fill="#8a8a8a"/><rect x="1" y="10" width="6" height="6" fill="#8a8a8a"/><rect x="10" y="10" width="6" height="6" fill="#8a8a8a"/></svg>
<div class="t" style="left:394px;top:124px;font-size:12px;color:#7e7e7e;">Array</div>
<svg class="a" style="left:429px;top:128px" width="7" height="5"><path d="M0 0H6L3 3.5Z" fill="#9a9a9a"/></svg>
<svg class="a" style="left:448px;top:122px" width="17" height="17"><path d="M1 15H16V11H11V5Q11 1 8 1Q5 1 5 5V11H1Z" fill="none" stroke="#8a8a8a" stroke-width="1.3"/></svg>
<div class="t" style="left:486px;top:72px;font-size:34px;color:#8a8a8a;font-weight:normal">A</div>
<div class="t" style="left:488px;top:110px;font-size:12px;color:#7e7e7e;">Text</div>
<svg class="a" style="left:495px;top:125px" width="7" height="5"><path d="M0 0H6L3 3.5Z" fill="#9a9a9a"/></svg>
<svg class="a" style="left:525px;top:74px" width="17" height="17"><path d="M1 2V15M16 2V15M1 6H16" stroke="#8a8a8a" stroke-width="1.3"/></svg>
<div class="t" style="left:547px;top:76px;font-size:12px;color:#7e7e7e;">Linear</div>
<svg class="a" style="left:586px;top:80px" width="7" height="5"><path d="M0 0H6L3 3.5Z" fill="#9a9a9a"/></svg>
<svg class="a" style="left:525px;top:98px" width="17" height="17"><path d="M2 16L6 8H9" stroke="#8a8a8a" stroke-width="1.3" fill="none"/><circle cx="12" cy="6" r="3" fill="#8a8a8a"/></svg>
<div class="t" style="left:547px;top:100px;font-size:12px;color:#7e7e7e;">Leader</div>
<svg class="a" style="left:589px;top:104px" width="7" height="5"><path d="M0 0H6L3 3.5Z" fill="#9a9a9a"/></svg>
<svg class="a" style="left:526px;top:122px" width="17" height="17"><rect x="1" y="2" width="15" height="13" fill="#8a8a8a"/><path d="M1 6H16M1 10H16M6 2V15M11 2V15" stroke="#6a6a6a"/></svg>
<div class="t" style="left:547px;top:124px;font-size:12px;color:#7e7e7e;">Table</div>
<svg class="a" style="left:617px;top:72px" width="34" height="32"><path d="M2 9L12 3L22 9L12 15Z" fill="#8a8a8a" stroke="#6a6a6a"/><path d="M2 14L12 8L22 14L12 20Z" fill="#8a8a8a" stroke="#6a6a6a"/><path d="M2 19L12 13L22 19L12 25Z" fill="#8a8a8a" stroke="#6a6a6a"/><rect x="19" y="12" width="13" height="19" fill="#7a7a7a" stroke="#8a8a8a"/><rect x="22" y="15" width="7" height="5" fill="#666"/></svg>
<div class="t" style="left:620px;top:110px;font-size:12px;color:#7e7e7e;">Layer</div>
<div class="t" style="left:607px;top:124px;font-size:12px;color:#7e7e7e;">Properties</div>
<div class="a" style="left:664px;top:72px;width:208px;height:21px;border:1px solid #444;border-radius:2px;background:linear-gradient(#5c5c5c,#585858)"></div>
<svg class="a" style="left:669px;top:74px" width="80" height="17"><ellipse cx="7" cy="6" rx="4" ry="5" fill="#9a9070"/><rect x="5" y="11" width="4" height="4" fill="#8a8a8a"/><circle cx="27" cy="8" r="4" fill="#9a9a80"/><path d="M27 1V15M20 8H34M22 3L32 13M32 3L22 13" stroke="#8a8a7a"/><path d="M40 6L48 2L52 5L44 9Z" fill="#8a8a8a"/><rect x="44" y="9" width="8" height="6" fill="#8a8a8a"/><rect x="58" y="2" width="13" height="13" fill="#a0a0a0" stroke="#777"/></svg>
<div class="t" style="left:745px;top:76px;font-size:12px;color:#6e6e6e;">0</div>
<svg class="a" style="left:863px;top:80px" width="7" height="5"><path d="M0 0H6L3 3.5Z" fill="#bbb"/></svg>
<svg class="a" style="left:667px;top:98px" width="110" height="17"><path d="M1 6L8 2L14 5L7 9Z" fill="#8a8a8a"/><circle cx="11" cy="11" r="3" fill="#8a8a8a"/><path d="M27 3L35 1M27 7L35 5M27 11L35 9" stroke="#8a8a8a" stroke-width="2"/><path d="M52 6L58 2L64 5L58 9Z" fill="#8a8a8a"/><circle cx="59" cy="11" r="3" fill="#8a8a8a"/><path d="M76 6L82 2L88 5Z" fill="#8a8a8a"/><rect x="82" y="8" width="7" height="7" fill="#8a8a8a"/><path d="M99 4L108 1M99 8L108 5M99 12L108 9" stroke="#8a8a8a" stroke-width="2"/></svg>
<svg class="a" style="left:667px;top:122px" width="110" height="17"><path d="M1 6L8 2L14 5L7 9Z" fill="#8a8a8a"/><circle cx="11" cy="11" r="3" fill="#8a8a8a"/><path d="M27 3L35 1M27 7L35 5M27 11L35 9" stroke="#8a8a8a" stroke-width="2"/><path d="M52 6L58 2L64 5L58 9Z" fill="#8a8a8a"/><circle cx="59" cy="11" r="3" fill="#8a8a8a"/><path d="M76 6L82 2L88 5Z" fill="#8a8a8a"/><rect x="82" y="8" width="7" height="7" fill="#8a8a8a"/><path d="M99 4L108 1M99 8L108 5M99 12L108 9" stroke="#8a8a8a" stroke-width="2"/></svg>
<div class="t" style="left:785px;top:100px;font-size:12px;color:#7e7e7e;">Make Current</div>
<div class="t" style="left:785px;top:124px;font-size:12px;color:#7e7e7e;">Match Layer</div>
<svg class="a" style="left:880px;top:72px" width="34" height="32"><rect x="6" y="3" width="14" height="12" fill="#8a8a8a"/><rect x="2" y="12" width="18" height="14" fill="#868686" stroke="#6a6a6a"/><circle cx="22" cy="22" r="8" fill="#8a8a8a" stroke="#6a6a6a"/><rect x="20" y="2" width="11" height="16" fill="#7a7a7a"/></svg>
<div class="t" style="left:881px;top:110px;font-size:12px;color:#7e7e7e;">Insert</div>
<svg class="a" style="left:920px;top:74px" width="17" height="17"><rect x="2" y="4" width="9" height="8" fill="#8a8a8a"/><circle cx="12" cy="11" r="4" fill="#8a8a8a"/></svg>
<div class="t" style="left:940px;top:76px;font-size:12px;color:#7e7e7e;">Create</div>
<svg class="a" style="left:920px;top:98px" width="17" height="17"><rect x="2" y="5" width="9" height="8" fill="#8a8a8a"/><circle cx="11" cy="12" r="4" fill="#8a8a8a"/><path d="M12 1L15 4" stroke="#9a9a9a"/></svg>
<div class="t" style="left:940px;top:100px;font-size:12px;color:#7e7e7e;">Edit</div>
<svg class="a" style="left:920px;top:122px" width="17" height="17"><path d="M3 7L8 13L15 3" stroke="#8a8a8a" stroke-width="2.5" fill="none"/><path d="M1 1L4 4" stroke="#6a6a6a"/></svg>
<div class="t" style="left:940px;top:124px;font-size:12px;color:#7e7e7e;">Edit Attributes</div>
<svg class="a" style="left:1023px;top:128px" width="7" height="5"><path d="M0 0H6L3 3.5Z" fill="#9a9a9a"/></svg>
<svg class="a" style="left:1050px;top:72px" width="34" height="32"><rect x="3" y="1" width="19" height="27" fill="#8a8a8a" stroke="#6a6a6a"/><rect x="6" y="4" width="13" height="9" fill="#747474" stroke="#6a6a6a"/><path d="M6 20H16M10 17V23" stroke="#666"/><path d="M20 26L31 15" stroke="#7a7a7a" stroke-width="3"/><ellipse cx="22" cy="25" rx="5" ry="3" fill="#777"/></svg>
<div class="t" style="left:1051px;top:110px;font-size:12px;color:#7e7e7e;">Match</div>
<div class="t" style="left:1041px;top:124px;font-size:12px;color:#7e7e7e;">Properties</div>
<svg class="a" style="left:1099px;top:72px" width="17" height="17"><circle cx="8.5" cy="8.5" r="7.5" fill="#c04040"/><path d="M8.5 8.5L8.5 1A7.5 7.5 0 0 1 15 5Z" fill="#e0c030"/><path d="M8.5 8.5L15 5A7.5 7.5 0 0 1 15 12Z" fill="#40a040"/><path d="M8.5 8.5L15 12A7.5 7.5 0 0 1 8.5 16Z" fill="#3060c0"/><path d="M8.5 8.5L8.5 16A7.5 7.5 0 0 1 2 12Z" fill="#8040a0"/><path d="M8.5 8.5L2 5A7.5 7.5 0 0 1 8.5 1Z" fill="#e08030"/></svg>
<svg class="a" style="left:1099px;top:96px" width="17" height="17"><rect x="1" y="2" width="15" height="2" fill="#8a8a8a"/><rect x="1" y="7" width="15" height="3" fill="#8a8a8a"/><rect x="1" y="12" width="15" height="4" fill="#8a8a8a"/></svg>
<svg class="a" style="left:1099px;top:120px" width="17" height="17"><path d="M1 2.5H16M1 6.5H16M1 10.5H16M1 14.5H16" stroke="#8a8a8a" stroke-dasharray="3 1"/></svg>
<div class="a" style="left:1119px;top:72px;width:179px;height:21px;border:1px solid #444;border-radius:2px;background:linear-gradient(#5e5e5e,#585858)"></div>
<div class="a" style="left:1119px;top:95px;width:179px;height:21px;border:1px solid #444;border-radius:2px;background:linear-gradient(#5e5e5e,#585858)"></div>
<div class="a" style="left:1119px;top:119px;width:179px;height:21px;border:1px solid #444;border-radius:2px;background:linear-gradient(#5e5e5e,#585858)"></div>
<div class="a" style="left:1131px;top:74px;width:16px;height:17px;background:#a0a0a0;border:1px solid #777"></div>
<div class="t" style="left:1157px;top:76px;font-size:12px;color:#6e6e6e;">ByLayer</div>
<svg class="a" style="left:1288px;top:80px" width="7" height="5"><path d="M0 0H6L3 3.5Z" fill="#7a7a7a"/></svg>
<div class="a" style="left:1127px;top:104px;width:59px;height:1px;background:#f0f0f0"></div>
<div class="t" style="left:1188px;top:99px;font-size:12px;color:#8e8e8e;">ByLayer</div>
<svg class="a" style="left:1288px;top:103px" width="7" height="5"><path d="M0 0H6L3 3.5Z" fill="#eee"/></svg>
<div class="a" style="left:1127px;top:129px;width:59px;height:1px;background:#f0f0f0"></div>
<div class="t" style="left:1188px;top:123px;font-size:12px;color:#8e8e8e;">ByLayer</div>
<svg class="a" style="left:1288px;top:127px" width="7" height="5"><path d="M0 0H6L3 3.5Z" fill="#eee"/></svg>
<svg class="a" style="left:1305px;top:72px" width="34" height="34"><rect x="1" y="1" width="18" height="30" fill="none" stroke="#8a8a8a" stroke-dasharray="2 1"/><rect x="4" y="6" width="12" height="9" fill="#8a8a8a"/><circle cx="9" cy="24" r="5" fill="#8a8a8a"/><path d="M20 4L30 16M33 8L18 14M26 2L24 18" stroke="#9a9a9a" stroke-width="1.3"/></svg>
<div class="t" style="left:1306px;top:110px;font-size:12px;color:#7e7e7e;">Group</div>
<svg class="a" style="left:1347px;top:73px" width="17" height="17"><rect x="2" y="2" width="6" height="5" fill="#8a8a8a"/><circle cx="5" cy="12" r="2.5" fill="#8a8a8a"/><path d="M9 9L15 3" stroke="#8a8a8a" stroke-width="1.3"/></svg>
<svg class="a" style="left:1347px;top:97px" width="17" height="17"><path d="M1 1H8V15H1Z" fill="none" stroke="#8a8a8a" stroke-dasharray="1.5 1.5"/><rect x="3" y="4" width="3" height="3" fill="#8a8a8a"/><circle cx="4.5" cy="11" r="1.5" fill="#8a8a8a"/><path d="M10 8H16M13 5V11" stroke="#8a8a8a"/></svg>
<div class="a" style="left:1343px;top:120px;width:24px;height:21px;background:linear-gradient(#7a90b8,#5a74a8);border:1px solid #4a5a80"></div>
<svg class="a" style="left:1347px;top:123px" width="17" height="15"><rect x="2" y="2" width="4" height="4" fill="#8a9ab8"/><circle cx="4" cy="10" r="2" fill="#8a9ab8"/><path d="M9 2V13L11 10L14 14" stroke="#a8b4cc" fill="none" stroke-width="1.2"/></svg>
<svg class="a" style="left:1389px;top:80px" width="32" height="18"><path d="M1 4H31M1 1V7M31 1V7" stroke="#8a8a8a" stroke-width="1.2"/><path d="M4 4L8 2V6Z M28 4L24 2V6Z" fill="#8a8a8a"/><rect x="2" y="12" width="28" height="4" fill="none" stroke="#8a8a8a" stroke-dasharray="1 1"/></svg>
<div class="t" style="left:1382px;top:110px;font-size:12px;color:#7e7e7e;">Measure</div>
<svg class="a" style="left:1402px;top:125px" width="7" height="5"><path d="M0 0H6L3 3.5Z" fill="#9a9a9a"/></svg>
<svg class="a" style="left:1443px;top:73px" width="17" height="17"><rect x="1" y="2" width="9" height="13" fill="#8a8a8a"/><path d="M8 6L13 12L10 12L11 15" stroke="#6a6a6a" fill="#9a9a9a"/></svg>
<svg class="a" style="left:1443px;top:97px" width="17" height="17"><path d="M8.5 1V16M1 8.5H16" stroke="#8a8a8a" stroke-width="1.3"/><circle cx="8.5" cy="8.5" r="2.5" fill="none" stroke="#8a8a8a"/></svg>
<svg class="a" style="left:1445px;top:121px" width="13" height="17"><rect x="1" y="1" width="11" height="15" fill="#8a8a8a"/><rect x="3" y="3" width="7" height="3" fill="#6a6a6a"/><path d="M3 8H10M3 11H10M3 14H10M5 8V15M8 8V15" stroke="#6a6a6a"/></svg>
<svg class="a" style="left:1481px;top:72px" width="28" height="32"><rect x="2" y="4" width="16" height="22" fill="#8a8a8a" stroke="#777"/><rect x="7" y="1" width="6" height="5" fill="#9a9a9a"/><path d="M9 10H21L26 15V30H9Z" fill="#949494" stroke="#777"/></svg>
<div class="t" style="left:1480px;top:110px;font-size:12px;color:#7e7e7e;">Paste</div>
<svg class="a" style="left:1491px;top:125px" width="7" height="5"><path d="M0 0H6L3 3.5Z" fill="#9a9a9a"/></svg>
<svg class="a" style="left:1524px;top:74px" width="17" height="17"><path d="M2 2L14 13M14 2L2 13" stroke="#8a8a8a" stroke-width="1.3"/><circle cx="3" cy="14" r="2" fill="none" stroke="#8a8a8a"/><circle cx="13" cy="14" r="2" fill="none" stroke="#8a8a8a"/></svg>
<svg class="a" style="left:1524px;top:98px" width="17" height="17"><rect x="1" y="1" width="9" height="11" fill="#8a8a8a"/><rect x="5" y="5" width="10" height="11" fill="#949494" stroke="#777"/></svg>
<svg class="a" style="left:1564px;top:79px" width="28" height="20"><path d="M1 1H11L13 5H26V19H1Z" fill="#8a8a8a"/></svg>
<div class="t" style="left:1567px;top:110px;font-size:12px;color:#7e7e7e;">Base</div>
<svg class="a" style="left:1575px;top:125px" width="7" height="5"><path d="M0 0H6L3 3.5Z" fill="#9a9a9a"/></svg>

<!-- file tabs -->
<svg class="a" style="left:0;top:165px" width="200" height="25"><path d="M10 25 Q18 24 20 12 Q22 3 32 3 L130 3 Q140 3 142 12 Q144 24 152 25 Z" fill="url(#ftg)" stroke="#777" stroke-width="0.8"/><defs><linearGradient id="ftg" x1="0" y1="0" x2="0" y2="1"><stop offset="0" stop-color="#6e6e6e"/><stop offset="1" stop-color="#575757"/></linearGradient></defs><path d="M150 25 Q155 23 156 14 Q157 7 164 7 L166 7 Q173 7 173 13 Q172 22 168 25 Z" fill="#4a4a4a"/></svg>
<div class="t" style="left:31px;top:174px;font-size:12px;color:#fff;text-shadow:0 0 1px #333">Drawing2</div>
<svg class="a" style="left:123px;top:176px" width="8" height="8"><path d="M1 1L7 7M7 1L1 7" stroke="#8a8a8a" stroke-width="1.6"/></svg>
<svg class="a" style="left:157px;top:176px" width="9" height="9"><path d="M4.5 1V8M1 4.5H8" stroke="#bbb" stroke-width="2.2"/></svg>
<div class="a" style="left:0px;top:194px;width:152px;height:25px;border:1px solid #3c3c3c;background:#5c5c5c;box-shadow:inset 1px 1px 0 #6a6a6a"></div>
<div class="a" style="left:2px;top:196px;width:6px;height:21px;background:#525252"></div>
<div class="a" style="left:3px;top:198px;width:3px;height:17px;background:repeating-linear-gradient(#bbb 0 1px,transparent 1px 2px)"></div>
<div class="a" style="left:154px;top:194px;width:226px;height:25px;border:1px solid #3c3c3c;background:#5c5c5c;box-shadow:inset 1px 1px 0 #6a6a6a"></div>
<div class="a" style="left:156px;top:196px;width:6px;height:21px;background:#525252"></div>
<div class="a" style="left:157px;top:198px;width:3px;height:17px;background:repeating-linear-gradient(#bbb 0 1px,transparent 1px 2px)"></div>
<div class="a" style="left:383px;top:194px;width:436px;height:25px;border:1px solid #3c3c3c;background:#5c5c5c;box-shadow:inset 1px 1px 0 #6a6a6a"></div>
<div class="a" style="left:385px;top:196px;width:6px;height:21px;background:#525252"></div>
<div class="a" style="left:386px;top:198px;width:3px;height:17px;background:repeating-linear-gradient(#bbb 0 1px,transparent 1px 2px)"></div>
<svg class="a" style="left:12px;top:198px" width="17" height="17"><rect x="1" y="1" width="13" height="14" fill="#fff" stroke="#a02020"/><rect x="1" y="6" width="8" height="9" fill="none" stroke="#111"/><rect x="2" y="9" width="3" height="5" fill="#111"/></svg>
<svg class="a" style="left:39px;top:198px" width="17" height="17"><rect x="4" y="1" width="9" height="5" fill="#ddd" stroke="#111"/><rect x="1" y="5" width="15" height="8" rx="2" fill="#333" stroke="#111"/><rect x="3" y="7" width="11" height="2" fill="#ccc"/><rect x="10" y="10" width="3" height="2" fill="#e8d040"/><rect x="2" y="13" width="13" height="3" fill="#222"/></svg>
<div class="a" style="left:32px;top:198px;width:2px;height:17px;background:linear-gradient(90deg,#1e1e1e 0 1px,#b8b8b8 1px 2px)"></div>
<div class="a" style="left:62px;top:198px;width:2px;height:17px;background:linear-gradient(90deg,#1e1e1e 0 1px,#b8b8b8 1px 2px)"></div>
<div class="a" style="left:68px;top:198px;width:2px;height:17px;background:linear-gradient(90deg,#1e1e1e 0 1px,#b8b8b8 1px 2px)"></div>
<div class="a" style="left:74px;top:198px;width:2px;height:17px;background:linear-gradient(90deg,#1e1e1e 0 1px,#b8b8b8 1px 2px)"></div>
<svg class="a" style="left:81px;top:198px" width="17" height="17"><rect x="1" y="2" width="15" height="13" fill="none" stroke="#111" stroke-width="1.5"/><path d="M1 10H16M6 10V15M11 10V15" stroke="#111" stroke-width="1.2"/></svg>
<svg class="a" style="left:104px;top:198px" width="17" height="17"><path d="M1 5V1H5M12 1H16V5M16 12V16H12M5 16H1V12" stroke="#111" stroke-width="2" fill="none"/></svg>
<div class="a" style="left:126px;top:198px;width:2px;height:17px;background:linear-gradient(90deg,#1e1e1e 0 1px,#b8b8b8 1px 2px)"></div>
<svg class="a" style="left:132px;top:198px" width="17" height="17"><text x="3" y="15" font-size="17" font-weight="bold" fill="#c01818" font-family="Liberation Serif">?</text></svg>
<svg class="a" style="left:166px;top:198px" width="17" height="17"><circle cx="6.5" cy="6.5" r="5" fill="#f0f0f0" stroke="#222" stroke-width="1.3"/><path d="M10 10L15 15" stroke="#ddd" stroke-width="3"/><path d="M10 10L15 15" stroke="#333" stroke-width="1"/><rect x="4" y="4" width="5" height="5" fill="none" stroke="#222"/></svg>
<svg class="a" style="left:188px;top:198px" width="17" height="17"><path d="M1 4V1H4M9 1H12V4M1 9V12H4" stroke="#eee" stroke-width="1.5" fill="none"/><circle cx="10" cy="10" r="3.5" fill="#eee" stroke="#333"/><path d="M12.5 12.5L16 16" stroke="#ddd" stroke-width="2"/></svg>
<svg class="a" style="left:212px;top:198px" width="17" height="17"><circle cx="6.5" cy="6.5" r="5" fill="#f0f0f0" stroke="#222" stroke-width="1.3"/><path d="M10 10L15 15" stroke="#ddd" stroke-width="3"/><path d="M10 10L15 15" stroke="#333" stroke-width="1"/><path d="M4 4L9 9M9 4L4 9" stroke="#222"/></svg>
<svg class="a" style="left:235px;top:198px" width="17" height="17"><circle cx="6.5" cy="6.5" r="5" fill="#f0f0f0" stroke="#222" stroke-width="1.3"/><path d="M10 10L15 15" stroke="#ddd" stroke-width="3"/><path d="M10 10L15 15" stroke="#333" stroke-width="1"/><path d="M6.5 3V10M3 6.5H10" stroke="#222"/></svg>
<svg class="a" style="left:257px;top:198px" width="17" height="17"><rect x="1" y="1" width="9" height="9" fill="#eee" stroke="#777"/><circle cx="10" cy="10" r="3.5" fill="#eee" stroke="#333"/><path d="M12.5 12.5L16 16" stroke="#ddd" stroke-width="2"/></svg>
<div class="a" style="left:280px;top:198px;width:2px;height:17px;background:linear-gradient(90deg,#1e1e1e 0 1px,#b8b8b8 1px 2px)"></div>
<svg class="a" style="left:287px;top:198px" width="17" height="17"><circle cx="6.5" cy="6.5" r="5" fill="#f0f0f0" stroke="#222" stroke-width="1.3"/><path d="M10 10L15 15" stroke="#ddd" stroke-width="3"/><path d="M10 10L15 15" stroke="#333" stroke-width="1"/><path d="M6.5 3V10M3 6.5H10" stroke="#222" stroke-width="1.5"/></svg>
<svg class="a" style="left:310px;top:198px" width="17" height="17"><path d="M1 2H9" stroke="#eee" stroke-width="2"/><circle cx="10" cy="10" r="3.5" fill="#eee" stroke="#333"/><path d="M12.5 12.5L16 16" stroke="#ddd" stroke-width="2"/></svg>
<div class="a" style="left:332px;top:198px;width:2px;height:17px;background:linear-gradient(90deg,#1e1e1e 0 1px,#b8b8b8 1px 2px)"></div>
<svg class="a" style="left:338px;top:198px" width="17" height="17"><path d="M2 1H9L12 4V15H2Z" fill="#eee" stroke="#555"/><circle cx="10" cy="10" r="3.5" fill="#eee" stroke="#333"/><path d="M12.5 12.5L16 16" stroke="#ddd" stroke-width="2"/></svg>
<svg class="a" style="left:360px;top:198px" width="17" height="17"><path d="M7 1V13M1 7H13M4 4L10 10M10 4L4 10" stroke="#eee" stroke-width="1.2"/><circle cx="10" cy="10" r="3.5" fill="#eee" stroke="#333"/><path d="M12.5 12.5L16 16" stroke="#ddd" stroke-width="2"/></svg>
<svg class="a" style="left:395px;top:198px" width="17" height="17"><path d="M1 3V15M16 3V15M1 9H16" stroke="#111" stroke-width="1.5"/><path d="M1 9L5 7V11Z M16 9L12 7V11Z" fill="#111"/></svg>
<svg class="a" style="left:418px;top:198px" width="17" height="17"><path d="M3 1L1 4M15 16L13 13M3 3L14 14" stroke="#111" stroke-width="1.5"/><path d="M2 2L7 3L3 7Z M15 15L10 14L14 10Z" fill="#111"/></svg>
<svg class="a" style="left:441px;top:198px" width="17" height="17"><path d="M4 16V5M4 12H16M9 12V2M13 16V5" stroke="#111" stroke-width="1.2" stroke-dasharray="2 1"/><text x="0" y="8" font-size="6" fill="#111">Y</text><text x="12" y="5" font-size="6" fill="#111">X</text></svg>
<div class="a" style="left:463px;top:198px;width:2px;height:17px;background:linear-gradient(90deg,#1e1e1e 0 1px,#b8b8b8 1px 2px)"></div>
<svg class="a" style="left:470px;top:198px" width="17" height="17"><circle cx="8.5" cy="8.5" r="7.5" fill="none" stroke="#777"/><path d="M5 5L10 10" stroke="#111" stroke-width="1.3"/><path d="M4 4L8 4L4 8Z" fill="#111"/></svg>
<svg class="a" style="left:494px;top:198px" width="17" height="17"><circle cx="8.5" cy="8.5" r="7.5" fill="none" stroke="#777"/><path d="M4 4L13 13" stroke="#111" stroke-width="1.3"/><path d="M3 3L7 3L3 7Z M14 14L10 14L14 10Z" fill="#111"/></svg>
<svg class="a" style="left:516px;top:198px" width="17" height="17"><path d="M1 15H16M2 15L12 4" stroke="#111" stroke-width="1.3"/><path d="M11 6Q15 10 14 15" stroke="#111" fill="none"/></svg>
<div class="a" style="left:538px;top:198px;width:2px;height:17px;background:linear-gradient(90deg,#1e1e1e 0 1px,#b8b8b8 1px 2px)"></div>
<svg class="a" style="left:544px;top:198px" width="17" height="17"><path d="M1 1V9M15 1V9M1 5H15" stroke="#111" stroke-width="1.3"/><path d="M10 8L7 13H10L8 17L14 10H11L13 8Z" fill="#f0d020"/></svg>
<svg class="a" style="left:567px;top:198px" width="17" height="17"><path d="M1 2V16M16 2V16M1 5H16M1 13H16M5 9V16" stroke="#111" stroke-width="1.3"/></svg>
<svg class="a" style="left:590px;top:198px" width="17" height="17"><path d="M1 3V15M16 3V15M6 5V15M11 5V15M1 9H16" stroke="#111" stroke-width="1.3"/><path d="M3 9H4M13 9H14" stroke="#c00" stroke-width="2"/></svg>
<div class="a" style="left:613px;top:198px;width:2px;height:17px;background:linear-gradient(90deg,#1e1e1e 0 1px,#b8b8b8 1px 2px)"></div>
<svg class="a" style="left:620px;top:198px" width="17" height="17"><path d="M1 15L6 9" stroke="#111" stroke-width="1.3"/><path d="M6 9H9" stroke="#111"/><text x="10" y="8" font-size="7" fill="#111">A</text><path d="M1 15L3 12L4 14Z" fill="#111"/></svg>
<svg class="a" style="left:643px;top:198px" width="17" height="17"><path d="M1 15L6 9" stroke="#111" stroke-width="1.3"/><path d="M6 9H9" stroke="#111"/><text x="10" y="8" font-size="7" fill="#111">A</text><path d="M1 15L3 12L4 14Z" fill="#111"/></svg>
<svg class="a" style="left:665px;top:198px" width="17" height="17"><rect x="0" y="3" width="17" height="11" fill="#fff" stroke="#111"/><rect x="1" y="4" width="7" height="9" fill="#111"/><circle cx="4.5" cy="8.5" r="2.5" fill="none" stroke="#fff"/><text x="9" y="12" font-size="8" fill="#111" font-weight="bold">.1</text></svg>
<svg class="a" style="left:689px;top:198px" width="17" height="17"><circle cx="8.5" cy="8.5" r="7.5" fill="none" stroke="#777"/><path d="M8.5 5V12M5 8.5H12" stroke="#111" stroke-width="1.2"/></svg>
<div class="a" style="left:711px;top:198px;width:2px;height:17px;background:linear-gradient(90deg,#1e1e1e 0 1px,#b8b8b8 1px 2px)"></div>
<svg class="a" style="left:718px;top:198px" width="17" height="17"><path d="M4 10L8.5 1L13 10M6 7H11" stroke="#b01010" stroke-width="1.2" fill="none"/><path d="M1 11V17M16 11V17M1 14H16" stroke="#111" stroke-width="1.5"/></svg>
<svg class="a" style="left:741px;top:198px" width="17" height="17"><path d="M3 10L7.5 1L12 10M5 7H10" stroke="#111" stroke-width="1.2" fill="none"/><path d="M9 10L12 2L15 10" stroke="#aaa" fill="none"/><path d="M1 11V17M16 11V17M1 14H16" stroke="#111" stroke-width="1.5"/></svg>
<div class="a" style="left:763px;top:198px;width:2px;height:17px;background:linear-gradient(90deg,#1e1e1e 0 1px,#b8b8b8 1px 2px)"></div>
<svg class="a" style="left:770px;top:198px" width="17" height="17"><path d="M2 1V12M16 1V14M2 4H16" stroke="#111" stroke-width="1.5"/><circle cx="5" cy="11" r="3" fill="#fff"/><path d="M7 13L10 16" stroke="#2080d0" stroke-width="2"/></svg>
<div class="a" style="left:792px;top:198px;width:2px;height:17px;background:linear-gradient(90deg,#1e1e1e 0 1px,#b8b8b8 1px 2px)"></div>
<svg class="a" style="left:799px;top:198px" width="17" height="17"><path d="M1 4V16M12 4V16M1 10H12" stroke="#111" stroke-width="1.5"/><path d="M4 1V14M16 1V17M4 4H16" stroke="#d01010" stroke-width="1.2"/></svg>
<div class="a" style="left:1863px;top:222px;width:25px;height:351px;border:1px solid #3a3a3a;background:#646464;box-shadow:inset 1px 1px 0 #727272"></div>
<div class="a" style="left:1864px;top:223px;width:23px;height:8px;background:#555"></div>
<div class="a" style="left:1869px;top:225px;width:13px;height:1px;background:repeating-linear-gradient(90deg,#ddd 0 1px,transparent 1px 2px)"></div>
<div class="a" style="left:1869px;top:227px;width:13px;height:1px;background:repeating-linear-gradient(90deg,#ddd 0 1px,transparent 1px 2px)"></div>
<div class="a" style="left:1863px;top:575px;width:25px;height:408px;border:1px solid #3a3a3a;background:#646464;box-shadow:inset 1px 1px 0 #727272"></div>
<div class="a" style="left:1864px;top:576px;width:23px;height:8px;background:#555"></div>
<div class="a" style="left:1869px;top:578px;width:13px;height:1px;background:repeating-linear-gradient(90deg,#ddd 0 1px,transparent 1px 2px)"></div>
<div class="a" style="left:1869px;top:580px;width:13px;height:1px;background:repeating-linear-gradient(90deg,#ddd 0 1px,transparent 1px 2px)"></div>
<div class="a" style="left:1891px;top:222px;width:25px;height:388px;border:1px solid #3a3a3a;background:#646464;box-shadow:inset 1px 1px 0 #727272"></div>
<div class="a" style="left:1892px;top:223px;width:23px;height:8px;background:#555"></div>
<div class="a" style="left:1897px;top:225px;width:13px;height:1px;background:repeating-linear-gradient(90deg,#ddd 0 1px,transparent 1px 2px)"></div>
<div class="a" style="left:1897px;top:227px;width:13px;height:1px;background:repeating-linear-gradient(90deg,#ddd 0 1px,transparent 1px 2px)"></div>
<div class="a" style="left:1891px;top:612px;width:25px;height:371px;border:1px solid #3a3a3a;background:#646464;box-shadow:inset 1px 1px 0 #727272"></div>
<div class="a" style="left:1892px;top:613px;width:23px;height:8px;background:#555"></div>
<div class="a" style="left:1897px;top:615px;width:13px;height:1px;background:repeating-linear-gradient(90deg,#ddd 0 1px,transparent 1px 2px)"></div>
<div class="a" style="left:1897px;top:617px;width:13px;height:1px;background:repeating-linear-gradient(90deg,#ddd 0 1px,transparent 1px 2px)"></div>
<svg class="a" style="left:1867px;top:235px" width="17" height="17"><g fill="none" stroke="#111" stroke-width="1.1"><circle cx="3" cy="3" r="2"/><circle cx="8.5" cy="2.5" r="2"/><circle cx="14" cy="3" r="2"/><circle cx="3" cy="8.5" r="2"/><circle cx="8.5" cy="8.5" r="2"/><circle cx="14" cy="8.5" r="2"/><circle cx="3" cy="14" r="2"/><circle cx="8.5" cy="13.5" r="2"/><circle cx="14" cy="14" r="2"/></g></svg>
<svg class="a" style="left:1867px;top:257px" width="17" height="17"><path d="M1 9H6L8 13L10 4L12 9H16" stroke="#111" stroke-width="1.8" fill="none"/></svg>
<svg class="a" style="left:1867px;top:278px" width="17" height="17"><path d="M5 2H12L16 8.5L12 15H5L1 8.5Z" fill="none" stroke="#111" stroke-width="1.2"/><path d="M8 5L10 4V13" stroke="#111" stroke-width="2"/></svg>
<svg class="a" style="left:1867px;top:299px" width="17" height="17"><rect x="1" y="1" width="15" height="15" fill="url(#mp)"/><defs><pattern id="mp" width="2" height="2" patternUnits="userSpaceOnUse"><rect width="1" height="1" fill="#111"/></pattern></defs></svg>
<svg class="a" style="left:1867px;top:322px" width="17" height="17"><path d="M1 10Q4 5 8 9Q12 13 16 7" stroke="#111" stroke-width="1.5" fill="none"/></svg>
<svg class="a" style="left:1867px;top:342px" width="17" height="17"><rect x="2" y="4" width="14" height="9" fill="none" stroke="#111" stroke-width="2"/><rect x="7" y="7" width="4" height="3" fill="#111"/></svg>
<svg class="a" style="left:1867px;top:363px" width="17" height="17"><path d="M2 4H16L9 12Z" fill="none" stroke="#111" stroke-width="1.3"/></svg>
<svg class="a" style="left:1867px;top:389px" width="17" height="17"><path d="M1 6H7L11 11H16" stroke="#111" stroke-width="2" fill="none"/><path d="M2 8L4 6M5 8L7 6M8 12L10 10M11 13L13 11M14 13L16 11" stroke="#111"/></svg>
<svg class="a" style="left:1867px;top:418px" width="17" height="17"><circle cx="4" cy="13" r="2.5" fill="none" stroke="#111"/><path d="M4 13L11 5H16" stroke="#111" stroke-width="1.2" fill="none"/></svg>
<svg class="a" style="left:1867px;top:438px" width="17" height="17"><path d="M8.5 4L13 8.5L8.5 13L4 8.5Z" fill="#111"/></svg>
<svg class="a" style="left:1867px;top:460px" width="17" height="17"><path d="M1 12H16M4 12V10M13 12V10" stroke="#111" stroke-width="2"/><circle cx="4" cy="9" r="1.5" fill="#111"/><circle cx="13" cy="9" r="1.5" fill="#111"/></svg>
<svg class="a" style="left:1867px;top:482px" width="17" height="17"><rect x="3" y="3" width="11" height="11" fill="none" stroke="#111" stroke-width="2"/><path d="M1 3H16M1 14H16M3 1V16M14 1V16" stroke="#111" stroke-width="1.5"/><rect x="6" y="6" width="5" height="5" fill="none" stroke="#111"/></svg>
<svg class="a" style="left:1867px;top:503px" width="17" height="17"><path d="M8.5 3L14 8.5L8.5 14L3 8.5Z" fill="#111"/></svg>
<svg class="a" style="left:1867px;top:533px" width="17" height="17"><path d="M8.5 1V16M2 5H15M2 12H15" stroke="#111" stroke-width="1.6"/></svg>
<svg class="a" style="left:1867px;top:554px" width="17" height="17"><path d="M5 1V16M12 1V16M1 5H16M1 12H16" stroke="#111" stroke-width="2"/><rect x="5" y="5" width="7" height="7" fill="none" stroke="#111"/></svg>
<svg class="a" style="left:1867px;top:587px" width="17" height="17"><path d="M2 6L9 3L16 6L9 9Z" fill="#e01010" stroke="#111" stroke-width=".8"/><path d="M2 9L9 12L16 9" stroke="#111" fill="#fff"/><path d="M2 12L9 15L16 12" stroke="#111" fill="none"/></svg>
<svg class="a" style="left:1867px;top:608px" width="17" height="17"><path d="M1 3L8.5 8.5L1 14Z M16 3L8.5 8.5L16 14Z" fill="#111"/><path d="M8.5 1V16M5 1H12M5 16H12" stroke="#111" stroke-width="2"/></svg>
<svg class="a" style="left:1867px;top:629px" width="17" height="17"><path d="M2 2V15M15 2V15M2 8.5H15" stroke="#111" stroke-width="3"/></svg>
<svg class="a" style="left:1867px;top:658px" width="17" height="17"><rect x="1" y="1" width="15" height="15" fill="#e0f0ff" stroke="#2060c0"/><path d="M1 5H16M1 9H16M1 13H16M5 1V16M9 1V16M13 1V16" stroke="#4a9ad8" stroke-dasharray="1 1"/><path d="M3 6V13H10" stroke="#d01010" stroke-width="2.5" fill="none"/></svg>
<svg class="a" style="left:1867px;top:679px" width="17" height="17"><text x="0" y="15" font-size="15" font-family="Liberation Serif" fill="#111">A</text><path d="M10 14L15 3L17 4L12 15Z" fill="#f0e020" stroke="#111" stroke-width=".8"/></svg>
<svg class="a" style="left:1867px;top:702px" width="17" height="17"><path d="M8.5 2V15M5 2H12M5 15H12" stroke="#111" stroke-width="1.4"/><path d="M8.5 6L11 8.5L8.5 11L6 8.5Z" fill="#111"/></svg>
<svg class="a" style="left:1867px;top:729px" width="17" height="17"><path d="M6 3L16 1V16L6 12Z" fill="#111"/><path d="M1 7.5H7" stroke="#e01010" stroke-width="4"/><circle cx="4" cy="7.5" r="3" fill="#e01010"/></svg>
<svg class="a" style="left:1867px;top:751px" width="17" height="17"><path d="M7 3L16 1V16L7 12Z" fill="#111"/><path d="M1 8.5H8M4 5V12" stroke="#e01010" stroke-width="3"/></svg>
<svg class="a" style="left:1867px;top:774px" width="17" height="17"><rect x="1.5" y="1.5" width="14" height="14" fill="none" stroke="#111" stroke-width="2.5"/><path d="M8.5 5L12 8.5L8.5 12L5 8.5Z" fill="#e01010"/></svg>
<svg class="a" style="left:1867px;top:795px" width="17" height="17"><rect x="1.5" y="1.5" width="14" height="14" fill="#1a1adf" stroke="#111" stroke-width="2.5"/><path d="M8.5 5L12 8.5L8.5 12L5 8.5Z" fill="#e01010"/></svg>
<svg class="a" style="left:1867px;top:817px" width="17" height="17"><rect x="0" y="0" width="17" height="17" fill="#b8b8b8" stroke="#333"/><path d="M2 2L15 15M15 2L2 15" stroke="#30b8e0" stroke-width="3.5"/><path d="M2 2L15 15M15 2L2 15" stroke="#111" stroke-width=".6"/></svg>
<svg class="a" style="left:1867px;top:846px" width="17" height="17"><circle cx="4" cy="8.5" r="3" fill="none" stroke="#111" stroke-width="1.5"/><path d="M7 8.5H16M12 2V16M10 5L14 12M14 5L10 12" stroke="#111" stroke-width="1.3"/></svg>
<svg class="a" style="left:1867px;top:866px" width="17" height="17"><path d="M4 6Q8.5 1 13 6" stroke="#e01010" stroke-width="1.5" fill="none"/><path d="M1 10H16" stroke="#111" stroke-width="2.5"/><rect x="3" y="7" width="3" height="7" fill="#111"/><rect x="10" y="7" width="3" height="7" fill="#111"/></svg>
<svg class="a" style="left:1867px;top:890px" width="17" height="17"><path d="M8.5 1V16M5 1H12M5 16H12M1 7H16" stroke="#111" stroke-width="2"/><ellipse cx="8.5" cy="9" rx="4" ry="3" fill="#111"/><path d="M1 7V12" stroke="#111" stroke-width="3"/></svg>
<svg class="a" style="left:1867px;top:912px" width="17" height="17"><rect x="1.5" y="1.5" width="14" height="14" fill="none" stroke="#111" stroke-width="2.5"/><path d="M1 6H16M1 10H16M6 1V16M11 1V16" stroke="#111" stroke-width="1.3"/></svg>
<svg class="a" style="left:1867px;top:941px" width="17" height="17"><path d="M2 2L10 8L2 15Z" fill="#111"/><path d="M9 8.5H16" stroke="#111" stroke-width="2.5"/></svg>
<svg class="a" style="left:1867px;top:962px" width="17" height="17"><path d="M2 1V16" stroke="#111" stroke-width="2.5"/><path d="M2 8.5H16" stroke="#111" stroke-width="2.5"/></svg>
<div class="a" style="left:1866px;top:410px;width:19px;height:2px;background:#f0f0f0"></div>
<div class="a" style="left:1866px;top:526px;width:19px;height:2px;background:#f0f0f0"></div>
<div class="a" style="left:1866px;top:652px;width:19px;height:2px;background:#f0f0f0"></div>
<div class="a" style="left:1866px;top:725px;width:19px;height:2px;background:#f0f0f0"></div>
<div class="a" style="left:1866px;top:840px;width:19px;height:2px;background:#f0f0f0"></div>
<div class="a" style="left:1866px;top:934px;width:19px;height:2px;background:#f0f0f0"></div>
<svg class="a" style="left:1895px;top:235px" width="17" height="17"><path d="M2 2H15V7H10V13H2Z" fill="none" stroke="#111" stroke-width="2.2"/><rect x="4.5" y="4.5" width="2" height="2" fill="#111"/><rect x="7.5" y="4.5" width="2" height="2" fill="#111"/><rect x="4.5" y="8.5" width="2" height="2" fill="#111"/><rect x="7.5" y="8.5" width="2" height="2" fill="#111"/></svg>
<svg class="a" style="left:1895px;top:257px" width="17" height="17"><rect x="2.5" y="2.5" width="12" height="12" fill="none" stroke="#111" stroke-width="2.4"/><rect x="5" y="5" width="2" height="2" fill="#111"/><rect x="10" y="5" width="2" height="2" fill="#111"/><rect x="5" y="10" width="2" height="2" fill="#111"/><rect x="10" y="10" width="2" height="2" fill="#111"/></svg>
<svg class="a" style="left:1895px;top:278px" width="17" height="17"><path d="M5 1V9M12 1V9" stroke="#111" stroke-width="1.3"/><rect x="3" y="9" width="11" height="7" fill="none" stroke="#111" stroke-width="2.5"/></svg>
<svg class="a" style="left:1895px;top:299px" width="17" height="17"><rect x="3" y="3" width="11" height="11" fill="none" stroke="#111" stroke-width="2"/><circle cx="3" cy="3" r="2" fill="#111"/><circle cx="14" cy="3" r="2" fill="#111"/><circle cx="3" cy="14" r="2" fill="#111"/><circle cx="14" cy="14" r="2" fill="#111"/></svg>
<svg class="a" style="left:1895px;top:322px" width="17" height="17"><rect x="1" y="1" width="9" height="13" fill="none" stroke="#111" stroke-width="1.3"/><rect x="7" y="4" width="9" height="12" fill="none" stroke="#111" stroke-width="1.3"/><path d="M2 13L9 2" stroke="#111" stroke-width=".8"/></svg>
<svg class="a" style="left:1895px;top:342px" width="17" height="17"><rect x="1.5" y="1.5" width="14" height="14" fill="none" stroke="#111" stroke-width="2"/><rect x="5" y="5" width="7" height="7" fill="none" stroke="#111"/><path d="M5 5L12 12M12 5L5 12" stroke="#111" stroke-width=".8"/></svg>
<svg class="a" style="left:1895px;top:364px" width="17" height="17"><path d="M1 3L7 8.5L1 14Z M16 3L10 8.5L16 14Z" fill="#111"/><path d="M8.5 1V16M5 1.5H12M5 15.5H12M1 8.5H16" stroke="#111" stroke-width="1.8"/></svg>
<svg class="a" style="left:1895px;top:387px" width="17" height="17"><path d="M8.5 1V16M5 1H12M5 16H12M1 8.5H16" stroke="#111" stroke-width="2"/><rect x="3" y="6" width="11" height="5" fill="#111"/></svg>
<svg class="a" style="left:1895px;top:410px" width="17" height="17"><path d="M2 16V1H10V9H16" stroke="#111" stroke-width="2.5" fill="none"/><path d="M2 14H16" stroke="#111"/></svg>
<svg class="a" style="left:1895px;top:433px" width="17" height="17"><path d="M2 1V16H16V8H9V1Z" fill="none" stroke="#111" stroke-width="2.5"/></svg>
<svg class="a" style="left:1895px;top:456px" width="17" height="17"><path d="M1 16V10H6V5H10V1H16M1 13H9V8H13V4H16" stroke="#111" stroke-width="2" fill="none"/></svg>
<svg class="a" style="left:1895px;top:476px" width="17" height="17"><path d="M1 16V2H16V16H11V7H6V16Z" fill="none" stroke="#111" stroke-width="2.5"/></svg>
<svg class="a" style="left:1895px;top:498px" width="17" height="17"><path d="M1 15H5V11H9V7H13V3H16M1 12H4V8H8V4H12V1" stroke="#111" stroke-width="1.8" fill="none"/></svg>
<svg class="a" style="left:1895px;top:519px" width="17" height="17"><path d="M1 13L6 4M5 13L10 4M9 13L14 4M13 13L16 7M1 4H16M1 13H16" stroke="#111" stroke-width="1.5"/></svg>
<svg class="a" style="left:1895px;top:548px" width="17" height="17"><path d="M2 1V16M1 1H8M1 16H8M5 1V16M8 5H13V12H8" stroke="#111" stroke-width="2" fill="none"/></svg>
<svg class="a" style="left:1895px;top:569px" width="17" height="17"><rect x="3" y="1" width="11" height="15" fill="none" stroke="#111" stroke-width="2"/><path d="M1 8.5H16M8.5 1V16" stroke="#111" stroke-width="1.3"/><path d="M5 5L8.5 8.5L12 5M5 12L8.5 8.5L12 12" stroke="#111"/></svg>
<svg class="a" style="left:1895px;top:592px" width="17" height="17"><rect x="3" y="3" width="11" height="11" fill="none" stroke="#111" stroke-width="2"/><circle cx="3" cy="3" r="2" fill="#111"/><circle cx="14" cy="3" r="2" fill="#111"/><circle cx="3" cy="14" r="2" fill="#111"/><circle cx="14" cy="14" r="2" fill="#111"/></svg>
<svg class="a" style="left:1895px;top:626px" width="17" height="17"><path d="M8.5 2V15M2 8.5H15" stroke="#111" stroke-width="1.3"/><circle cx="8.5" cy="8.5" r="3" fill="#111"/></svg>
<svg class="a" style="left:1895px;top:647px" width="17" height="17"><path d="M1 8.5H16" stroke="#111" stroke-width="1.3"/><ellipse cx="8.5" cy="8.5" rx="5" ry="3.5" fill="#111"/><path d="M8.5 3V14" stroke="#111"/></svg>
<svg class="a" style="left:1895px;top:667px" width="17" height="17"><path d="M1 12H16M3 12V9M14 12V9" stroke="#111" stroke-width="1.3" fill="none"/><circle cx="3" cy="8" r="1.3" fill="none" stroke="#111"/><circle cx="14" cy="8" r="1.3" fill="none" stroke="#111"/></svg>
<svg class="a" style="left:1895px;top:689px" width="17" height="17"><path d="M1 13H16M3 13V8H5M14 13V8H12" stroke="#111" stroke-width="1.3" fill="none"/></svg>
<svg class="a" style="left:1895px;top:712px" width="17" height="17"><path d="M1 10L4 7L8 11L12 7L16 10" stroke="#111" stroke-width="1.2" fill="none"/></svg>
<svg class="a" style="left:1895px;top:733px" width="17" height="17"><path d="M3 2H14M8.5 2V16" stroke="#111" stroke-width="3"/></svg>
<svg class="a" style="left:1895px;top:756px" width="17" height="17"><path d="M1 10Q4 4 8 9L12 13L16 9L12 5L8 9" stroke="#111" stroke-width="1.1" fill="none"/></svg>
<svg class="a" style="left:1895px;top:776px" width="17" height="17"><path d="M1 9L16 3M1 9L16 15" stroke="#111" stroke-width="1.1"/></svg>
<svg class="a" style="left:1895px;top:805px" width="17" height="17"><path d="M1 12H16M1 6H16" stroke="#111"/><path d="M2 12L5 6M6 12L9 6M10 12L13 6M14 12L16 8" stroke="#111" stroke-width="1.3"/></svg>
<svg class="a" style="left:1895px;top:826px" width="17" height="17"><path d="M1 5L5 13L9 5L13 13L16 7M1 13L5 5L9 13L13 5L16 11M1 9H16" stroke="#111" stroke-width="1.1" fill="none"/></svg>
<svg class="a" style="left:1895px;top:851px" width="17" height="17"><path d="M2 15H16V2Z" fill="#111"/></svg>
<svg class="a" style="left:1895px;top:878px" width="17" height="17"><path d="M1 8.5H16M7 1L16 8.5L7 16" stroke="#111" stroke-width="1.3" fill="none"/></svg>
<svg class="a" style="left:1895px;top:899px" width="17" height="17"><path d="M1 8.5H16M5 8.5V15M5 2V15M10 2V15" stroke="#111" stroke-width="1.3"/><path d="M4 2H11M4 15H11" stroke="#111"/></svg>
<svg class="a" style="left:1895px;top:919px" width="17" height="17"><path d="M3 2V15H16M3 8L8 2" stroke="#111" stroke-width="1.5" fill="none"/><path d="M3 2H7L3 7Z" fill="#111"/></svg>
<svg class="a" style="left:1895px;top:945px" width="17" height="17"><path d="M1 15L7 8M7 8H16" stroke="#111" stroke-width="1.2" fill="none"/><circle cx="8" cy="7" r="2.5" fill="none" stroke="#111"/></svg>
<svg class="a" style="left:1895px;top:966px" width="17" height="17"><path d="M1 8.5H10L15 3M10 8.5L15 14M15 3V14" stroke="#111" stroke-width="1.2" fill="none"/><path d="M11 8.5L14 6V11Z" fill="#111"/></svg>
<div class="a" style="left:1894px;top:542px;width:19px;height:2px;background:#f0f0f0"></div>
<div class="a" style="left:1894px;top:800px;width:19px;height:2px;background:#f0f0f0"></div>
<div class="a" style="left:1894px;top:872px;width:19px;height:2px;background:#f0f0f0"></div>
<svg class="a" style="left:1715px;top:243px;" width="122" height="122"><circle cx="60.6" cy="60.8" r="52.5" fill="none" stroke="rgba(60,60,60,0.8)" stroke-width="14.5"/></svg>
<div class="a" style="left:1750px;top:278px;width:52px;height:52px;background:rgba(160,160,160,0.93)"></div>
<div class="a" style="left:1760px;top:288px;width:32px;height:32px;background:rgba(140,140,140,0.5)"></div>
<div class="t" style="left:1750px;top:298px;width:52px;text-align:center;font-size:12px;font-weight:bold;color:#50555c;transform:scaleX(.9)">TOP</div>
<div class="t" style="left:1764px;top:238px;width:24px;text-align:center;font-size:21px;font-weight:bold;color:#b0b0b0">N</div>
<div class="t" style="left:1764px;top:351px;width:24px;text-align:center;font-size:21px;font-weight:bold;color:#b0b0b0">S</div>
<div class="t" style="left:1707.5px;top:294px;width:24px;text-align:center;font-size:21px;font-weight:bold;color:#b0b0b0">W</div>
<div class="t" style="left:1820px;top:294px;width:24px;text-align:center;font-size:21px;font-weight:bold;color:#b0b0b0">E</div>
<div class="a" style="left:1752px;top:391px;width:47px;height:17px;border-radius:4px;background:rgba(150,150,150,.85);border:1px solid #777"></div>
<div class="t" style="left:1757px;top:394px;font-size:11px;color:#555">WCS</div>
<svg class="a" style="left:1786px;top:397px;" width="8" height="5"><path d="M0 0H7L3.5 4Z" fill="#aaa"/></svg>
<div class="a" style="left:1823px;top:434px;width:32px;height:212px;border-radius:5px;background:rgba(105,105,105,.5)"></div>
<svg class="a" style="left:1826px;top:438px;" width="28" height="210"><g transform="translate(0.7,0.7)" opacity="0.9">
<circle cx="23" cy="4" r="3" fill="none" stroke="#727272"/>
<circle cx="13" cy="26" r="10" fill="none" stroke="#727272" stroke-width="1.3"/><circle cx="13" cy="26" r="5" fill="none" stroke="#727272" stroke-width="1.3"/><path d="M4 30L9 28M22 30L17 28M13 16V21" stroke="#727272"/>
<path d="M10 45L16 45L13 49Z" fill="#727272"/>
<path d="M3 52H25" stroke="#555"/>
<path d="M5 70Q8 66 10 70L10 58Q10 56 12 56Q14 56 14 58V56Q14 54 16 54Q18 54 18 56V58Q18 56 20 56Q22 56 22 58V74Q22 80 15 80Q9 80 5 72Z" fill="none" stroke="#727272" stroke-width="1.2"/>
<path d="M2 85L12 95M2 85V89M2 85H6M12 85L2 95M12 85H8M12 85V89" stroke="#727272" stroke-width="1.2"/><circle cx="17" cy="99" r="4.5" fill="none" stroke="#727272" stroke-width="1.3"/><path d="M20 102L24 106" stroke="#727272" stroke-width="2"/>
<path d="M10 113L16 113L13 117Z" fill="#727272"/>
<path d="M13 120V142M9 125L13 120L17 125" stroke="#727272" stroke-width="1.6" fill="none"/><ellipse cx="13" cy="134" rx="11" ry="5" fill="none" stroke="#727272" stroke-width="1.2"/>
<path d="M10 152L16 152L13 156Z" fill="#727272"/>
<rect x="2" y="161" width="6" height="6" fill="none" stroke="#727272"/><rect x="10" y="161" width="6" height="6" fill="none" stroke="#727272"/><rect x="18" y="161" width="6" height="6" fill="none" stroke="#727272"/>
<rect x="3" y="170" width="19" height="15" fill="none" stroke="#727272"/><path d="M9 173L17 177.5L9 182Z" fill="#727272"/>
<circle cx="23" cy="204" r="3" fill="none" stroke="#727272"/>
</g>
<circle cx="23" cy="4" r="3" fill="none" stroke="#262626"/>
<circle cx="13" cy="26" r="10" fill="none" stroke="#262626" stroke-width="1.3"/><circle cx="13" cy="26" r="5" fill="none" stroke="#262626" stroke-width="1.3"/><path d="M4 30L9 28M22 30L17 28M13 16V21" stroke="#262626"/>
<path d="M10 45L16 45L13 49Z" fill="#262626"/>
<path d="M3 52H25" stroke="#555"/>
<path d="M5 70Q8 66 10 70L10 58Q10 56 12 56Q14 56 14 58V56Q14 54 16 54Q18 54 18 56V58Q18 56 20 56Q22 56 22 58V74Q22 80 15 80Q9 80 5 72Z" fill="none" stroke="#262626" stroke-width="1.2"/>
<path d="M2 85L12 95M2 85V89M2 85H6M12 85L2 95M12 85H8M12 85V89" stroke="#262626" stroke-width="1.2"/><circle cx="17" cy="99" r="4.5" fill="none" stroke="#262626" stroke-width="1.3"/><path d="M20 102L24 106" stroke="#262626" stroke-width="2"/>
<path d="M10 113L16 113L13 117Z" fill="#262626"/>
<path d="M13 120V142M9 125L13 120L17 125" stroke="#262626" stroke-width="1.6" fill="none"/><ellipse cx="13" cy="134" rx="11" ry="5" fill="none" stroke="#262626" stroke-width="1.2"/>
<path d="M10 152L16 152L13 156Z" fill="#262626"/>
<rect x="2" y="161" width="6" height="6" fill="none" stroke="#262626"/><rect x="10" y="161" width="6" height="6" fill="none" stroke="#262626"/><rect x="18" y="161" width="6" height="6" fill="none" stroke="#262626"/>
<rect x="3" y="170" width="19" height="15" fill="none" stroke="#262626"/><path d="M9 173L17 177.5L9 182Z" fill="#262626"/>
<circle cx="23" cy="204" r="3" fill="none" stroke="#262626"/>
</svg>
<div class="a" style="left:20px;top:936px;width:137px;height:15px;border-radius:2px;background:rgba(44,46,50,.6)"></div>
<div class="a" style="left:20px;top:952px;width:60px;height:15px;border-radius:2px;background:rgba(44,46,50,.6)"></div>
<div class="a" style="left:20px;top:968px;width:746px;height:15px;border-radius:2px;background:rgba(44,46,50,.6)"></div>
<div class="t" style="left:22px;top:938px;font-family:'Liberation Mono',monospace;font-size:11.7px;color:#868686">Command: _..chs "."</div>
<div class="t" style="left:22px;top:954px;font-family:'Liberation Mono',monospace;font-size:11.7px;color:#868686">Command:</div>
<div class="t" style="left:22px;top:970px;font-family:'Liberation Mono',monospace;font-size:11.7px;color:#868686">StrucPLUS(tm) 15.0.3 Command. 'c:chs'. License OK. Copyright© 2014 CAD International. All Rights Reserved.</div>
<svg class="a" style="left:28px;top:905px;" width="80" height="80">
<path d="M6.5 22V72.5H57" stroke="#fff" stroke-width="1.2" fill="none"/>
<rect x="2.5" y="67.5" width="9" height="9" fill="none" stroke="#f0f0f0" stroke-width="1.3"/>
<path d="M8 5L14.5 11.5L21 5M14.5 11.5V18" stroke="#fff" stroke-width="1.2" fill="none"/>
<path d="M61 58L74 71M74 58L61 71" stroke="#fff" stroke-width="1.2"/>
</svg>
<div class="a" style="left:0;top:984px;width:18px;height:26px;background:linear-gradient(#2e2e2e,#4a4a4a 60%,#555)"></div>
<svg class="a" style="left:0px;top:989px;" width="17" height="17"><path d="M5 5L14 14" stroke="#d8d8d8" stroke-width="3" stroke-linecap="round"/><path d="M1 4A4 4 0 1 0 7 2L5 5L3 4Z" fill="#d8d8d8"/></svg>
<div class="a" style="left:18px;top:985px;width:1876px;height:25px;background:#b8b8b8;border-top:1px solid #c6c6c6;border-bottom:1px solid #c4c4c4;border-radius:3px 3px 0 0"></div>
<div class="a" style="left:1859px;top:985px;width:35px;height:25px;background:#cdcdcd;border-radius:0 3px 0 0"></div>
<div class="a" style="left:1894px;top:984px;width:25px;height:26px;background:#646464"></div>
<svg class="a" style="left:1866px;top:988px;" width="22" height="20"><path d="M2 8H18M9 2L3 8L9 14M9 2V14" stroke="#e6e6e6" stroke-width="2" fill="#e6e6e6"/><path d="M14 15H20L17 12Z" fill="#222"/></svg>
<div class="a" style="left:22px;top:989px;width:16px;height:15px;border:1px solid #888;border-radius:2px;background:#9e9e9e"></div>
<svg class="a" style="left:24px;top:991px;" width="13" height="11"><path d="M1 2L5 5L1 8M6 9H11" stroke="#333" stroke-width="1.2" fill="none"/></svg>
<svg class="a" style="left:41px;top:995px;" width="7" height="5"><path d="M0 0H6L3 3Z" fill="#555"/></svg>
<div class="t" style="left:53px;top:992px;font-family:'Liberation Mono',monospace;font-size:11.7px;font-style:italic;color:#707070">Type a command</div>
<svg class="a" style="left:0px;top:1010px;" width="230" height="20"><defs><linearGradient id="mt" x1="0" y1="0" x2="0" y2="1"><stop offset="0" stop-color="#5a5a5a"/><stop offset="1" stop-color="#6e6e6e"/></linearGradient></defs>
<path d="M68 0 Q72 0 74 6 Q76 17 82 17 L122 17 Q128 17 130 6 Q132 0 136 0Z" fill="#555"/>
<path d="M133 0 Q137 0 139 6 Q141 17 147 17 L189 17 Q195 17 197 6 Q199 0 203 0Z" fill="#555"/>
<path d="M4 0 Q9 0 11 6 Q13 17 19 17 L57 17 Q63 17 65 6 Q67 0 71 0Z" fill="url(#mt)"/>
<path d="M203 16 Q206 3 214 1 L225 0 Q223 14 214 16Z" fill="#4e4e4e"/></svg>
<div class="t" style="left:22px;top:1014px;font-size:12px;font-weight:bold;color:#fff">Model</div>
<div class="t" style="left:80px;top:1014px;font-size:12px;color:#e0e0e0">Layout1</div>
<div class="t" style="left:145px;top:1014px;font-size:12px;color:#e0e0e0">Layout2</div>
<svg class="a" style="left:210px;top:1015px;" width="9" height="9"><path d="M4.5 1V8M1 4.5H8" stroke="#bbb" stroke-width="2"/></svg>
<div class="a" style="left:1139px;top:1011px;width:780px;height:28px;background:#4e4e4e"></div>
<div class="a" style="left:1141px;top:1012px;width:201px;height:25px;border:1px dotted #7a7a7a;background:#555"></div>
<div class="a" style="left:1344px;top:1012px;width:48px;height:25px;border:1px dotted #7a7a7a;background:#555"></div>
<div class="a" style="left:1394px;top:1012px;width:64px;height:25px;border:1px dotted #7a7a7a;background:#555"></div>
<div class="a" style="left:1460px;top:1012px;width:102px;height:25px;border:1px dotted #7a7a7a;background:#555"></div>
<div class="a" style="left:1564px;top:1012px;width:62px;height:25px;border:1px dotted #7a7a7a;background:#555"></div>
<div class="a" style="left:1628px;top:1012px;width:110px;height:25px;border:1px dotted #7a7a7a;background:#555"></div>
<div class="a" style="left:1740px;top:1012px;width:40px;height:25px;border:1px dotted #7a7a7a;background:#555"></div>
<div class="a" style="left:1782px;top:1012px;width:23px;height:25px;border:1px dotted #7a7a7a;background:#555"></div>
<div class="a" style="left:1807px;top:1012px;width:25px;height:25px;border:1px dotted #7a7a7a;background:#555"></div>
<div class="a" style="left:1834px;top:1012px;width:31px;height:25px;border:1px dotted #7a7a7a;background:#555"></div>
<div class="a" style="left:1867px;top:1012px;width:47px;height:25px;border:1px dotted #7a7a7a;background:#555"></div>
<div class="t" style="left:1147px;top:1019px;font-size:12px;color:#f4f4f4">Drawing Scale = 1:1, Osnap = None</div>
<div class="t" style="left:1348px;top:1019px;font-size:12px;color:#f4f4f4">MODEL</div>
<svg class="a" style="left:1399px;top:1017px;" width="16" height="16"><path d="M2 1V15M5 1V15M8 1V15M11 1V15M14 1V15M0 4H16M0 8H16M0 12H16" stroke="#2a8cf0" stroke-width="1.4"/></svg>
<svg class="a" style="left:1422px;top:1017px;" width="16" height="16"><path d="M2 2H15M2 5H15M2 8H15M2 11H15M2 14H15" stroke="#aaa" stroke-dasharray="1 2"/></svg>
<svg class="a" style="left:1446px;top:1023px;" width="9" height="6"><path d="M0 0H8L4 4.5Z" fill="#eee"/></svg>
<svg class="a" style="left:1465px;top:1017px;" width="16" height="16"><path d="M3 1V14H15M3 9H8V14" stroke="#ccc" stroke-width="1.3" fill="none"/></svg>
<svg class="a" style="left:1489px;top:1016px;" width="17" height="17"><circle cx="8" cy="9" r="6" fill="none" stroke="#ccc" stroke-width="1.5"/><path d="M8 9L15 3" stroke="#ccc" stroke-width="1.5"/></svg>
<svg class="a" style="left:1512px;top:1023px;" width="9" height="6"><path d="M0 0H8L4 4.5Z" fill="#eee"/></svg>
<svg class="a" style="left:1527px;top:1016px;" width="18" height="18"><path d="M2 2L16 16M9 1V17" stroke="#bbb" stroke-width="1.3"/></svg>
<svg class="a" style="left:1552px;top:1023px;" width="9" height="6"><path d="M0 0H8L4 4.5Z" fill="#eee"/></svg>
<svg class="a" style="left:1571px;top:1016px;" width="17" height="17"><path d="M1 15H15M1 15L12 5" stroke="#2a8cf0" stroke-width="2"/><circle cx="6" cy="11" r="2" fill="#2a8cf0"/></svg>
<div class="a" style="left:1594px;top:1018px;width:14px;height:14px;border:1.5px solid #ddd"></div>
<div class="a" style="left:1592px;top:1016px;width:4px;height:4px;background:#1ee01e;border:1px solid #111"></div>
<svg class="a" style="left:1616px;top:1023px;" width="9" height="6"><path d="M0 0H8L4 4.5Z" fill="#eee"/></svg>
<svg class="a" style="left:1633px;top:1016px;" width="18" height="18"><path d="M9 2L3 16H7L9 12L11 16H15Z" fill="#2a8cf0"/><circle cx="12" cy="5" r="3" fill="none" stroke="#2a8cf0" stroke-width="1.6"/></svg>
<svg class="a" style="left:1657px;top:1016px;" width="18" height="18"><path d="M9 2L3 16H7L9 12L11 16H15Z" fill="#aaa"/><path d="M12 1L10 6H14L12 10" stroke="#ccc" fill="none"/></svg>
<svg class="a" style="left:1681px;top:1016px;" width="18" height="18"><path d="M9 2L3 16H7L9 12L11 16H15Z" fill="#aaa"/></svg>
<div class="t" style="left:1707px;top:1019px;font-size:12px;color:#fff">1:1</div>
<svg class="a" style="left:1728px;top:1023px;" width="9" height="6"><path d="M0 0H8L4 4.5Z" fill="#eee"/></svg>
<svg class="a" style="left:1747px;top:1017px;" width="16" height="16"><circle cx="8" cy="8" r="5.5" fill="none" stroke="#bbb" stroke-width="3" stroke-dasharray="2.2 1.4"/><circle cx="8" cy="8" r="4" fill="#bbb"/><circle cx="8" cy="8" r="1.5" fill="#555"/></svg>
<svg class="a" style="left:1769px;top:1023px;" width="9" height="6"><path d="M0 0H8L4 4.5Z" fill="#eee"/></svg>
<svg class="a" style="left:1786px;top:1018px;" width="15" height="15"><path d="M7.5 1V14M1 7.5H14" stroke="#ddd" stroke-width="1.8"/></svg>
<svg class="a" style="left:1812px;top:1016px;" width="19" height="19"><circle cx="9.5" cy="9.5" r="8.5" fill="#1a6ad8" stroke="#3a9af8" stroke-width="1.3"/><path d="M6 12L9 10M12 6L9 10" stroke="#9ad" stroke-width="1.2"/></svg>
<svg class="a" style="left:1842px;top:1016px;" width="17" height="17"><rect x="1" y="1" width="6" height="6" fill="none" stroke="#ccc"/><circle cx="12" cy="8" r="3.5" fill="none" stroke="#ccc"/><path d="M4 16L7 10L10 16Z" fill="none" stroke="#ccc"/></svg>
<svg class="a" style="left:1872px;top:1017px;" width="18" height="15"><rect x="1" y="1" width="16" height="13" fill="none" stroke="#ddd" stroke-width="1.3"/><path d="M4 11L8 7M11 7L15 3M4 8V11H7M12 3H15V6" stroke="#ddd" stroke-width="1.2" fill="none"/></svg>
<svg class="a" style="left:1896px;top:1018px;" width="17" height="14"><path d="M1 2H16M1 7H16M1 12H16" stroke="#ddd" stroke-width="2"/></svg>
<div class="a" style="left:0;top:1040px;width:1919px;height:3px;background:linear-gradient(#1e3a5a 0 1px,#4a8ccc 1px)"></div>
<div class="a" style="left:245px;top:1041px;width:58px;height:2px;background:#e8eef4"></div>


<!-- dialog -->
<div class="a" id="dlg" style="left:823px;top:370px;width:272px;height:300px;border-radius:7px 7px 5px 5px;border:1px solid #a8a8a8;background:linear-gradient(180deg,#a4a8ac 0px,#8e9296 40px,#9a9a9a 70px,#d8d8d8 86px,#f0f0f0 89px,#5a5a5a 94px,#3c3c3c 150px,#262626 230px,#1c1c1c 300px)"></div>
<div class="a" style="left:824px;top:371px;width:270px;height:26px;border-radius:6px 6px 0 0;background:linear-gradient(90deg,#a8acb0 0,#b8bcc0 40px,#aeb2b6 90px,#70767c 110px,#4a5058 125px,#3c424a 150px,#50565e 175px,#747a80 195px,#80868c 215px,#6a7076 270px)"></div>
<div class="a" style="left:826px;top:373px;width:110px;height:22px;border-radius:11px;background:radial-gradient(ellipse 56px 12px at 50% 50%,rgba(214,218,222,.95),rgba(190,194,198,.6) 70%,rgba(160,164,168,0) 100%)"></div>
<div class="t" style="left:830px;top:377px;font-size:12px;color:#111">Steel Members</div>
<div class="a" style="left:1042px;top:370px;width:48px;height:20px;border:1px solid #6a2a1a;border-top:none;border-radius:0 0 5px 5px;background:linear-gradient(#e0a890,#c87a5a 40%,#b0401c 50%,#a8381a 75%,#c86a4a)"></div>
<svg class="a" style="left:1060px;top:373px" width="13" height="12"><path d="M2 2L11 10M11 2L2 10" stroke="#5a4038" stroke-width="4.2" stroke-linecap="square"/><path d="M2 2L11 10M11 2L2 10" stroke="#f4f4f4" stroke-width="2.4" stroke-linecap="square"/></svg>
<div class="a" style="left:829px;top:397px;width:260px;height:269px;border:1px solid #3a3a3a;background:#f0f0f0"></div>
<div class="a" style="left:838px;top:402px;width:244px;height:156px;background:#000"></div>
<svg class="a" style="left:838px;top:402px" width="244" height="156">
 <circle cx="27.5" cy="80.5" r="22" fill="none" stroke="#f00" stroke-width="1"/>
 <circle cx="27.5" cy="80.5" r="19" fill="none" stroke="#f00" stroke-width="1"/>
 <g shape-rendering="crispEdges">
 <rect x="56" y="59" width="1" height="44" fill="#fff"/><rect x="134" y="59" width="1" height="44" fill="#fff"/>
 <rect x="56" y="58" width="79" height="1" fill="#ff0"/><rect x="56" y="102" width="79" height="1" fill="#ff0"/>
 <line x1="56" y1="62.5" x2="135" y2="62.5" stroke="#fff" stroke-width="1" stroke-dasharray="12 4.5"/>
 <line x1="56" y1="99.5" x2="135" y2="99.5" stroke="#fff" stroke-width="1" stroke-dasharray="12 4.5"/>
 <rect x="140" y="59" width="1" height="44" fill="#fff"/><rect x="218" y="59" width="1" height="44" fill="#fff"/>
 <rect x="140" y="58" width="79" height="1" fill="#ff0"/><rect x="140" y="102" width="79" height="1" fill="#ff0"/>
 <line x1="140" y1="62.5" x2="219" y2="62.5" stroke="#fff" stroke-width="1" stroke-dasharray="12 4.5"/>
 <line x1="140" y1="99.5" x2="219" y2="99.5" stroke="#fff" stroke-width="1" stroke-dasharray="12 4.5"/>
 </g>
</svg>
<div class="a" style="left:838px;top:571px;width:244px;height:38px;border:1px solid #d5dfe5;border-radius:3px"></div>
<div class="t" style="left:844px;top:566px;padding:0 3px;background:#f0f0f0;font-size:11px;color:#111">Draw Options:</div>
<div class="a" style="left:847px;top:590px;width:12px;height:12px;border-radius:50%;border:1px solid #8a8a8a;background:radial-gradient(circle at 50% 50%,#2a8ae0 0,#1a5aa8 2.5px,#dfe6ee 3.5px,#f4f4f4 6px)"></div>
<div class="t" style="left:863px;top:591px;font-size:11px;color:#111">Section?</div>
<div class="a" style="left:927px;top:590px;width:12px;height:12px;border-radius:50%;border:1px solid #8a8a8a;background:radial-gradient(circle at 50% 60%,#f8f8f8,#d8d8d8)"></div>
<div class="t" style="left:943px;top:591px;font-size:11px;color:#111">Plan?</div>
<div class="a" style="left:988px;top:590px;width:12px;height:12px;border-radius:50%;border:1px solid #8a8a8a;background:radial-gradient(circle at 50% 60%,#f8f8f8,#d8d8d8)"></div>
<div class="t" style="left:1004px;top:591px;font-size:11px;color:#111">Elevation?</div>
<div class="a" style="left:885px;top:617px;width:55px;height:20px;border:1px solid #3a9ad8;border-radius:3px;background:linear-gradient(#f2f8fc 0,#e6eef4 45%,#cfdde6 50%,#c8d6e0 100%);box-shadow:inset 0 0 0 1px #8ee0f8"></div>
<div class="t" style="left:904px;top:621px;font-size:12px;color:#111">OK</div>
<div class="a" style="left:970px;top:617px;width:64px;height:20px;border:1px solid #707070;border-radius:3px;background:linear-gradient(#f2f2f2 0,#ebebeb 45%,#dddddd 50%,#cfcfcf 100%);box-shadow:inset 0 0 0 1px #fcfcfc"></div>
<div class="t" style="left:984px;top:621px;font-size:12px;color:#111">Cancel</div>
<div class="t" style="left:838px;top:646px;font-size:11px;color:#111">Pipe Members</div>

</body></html>
